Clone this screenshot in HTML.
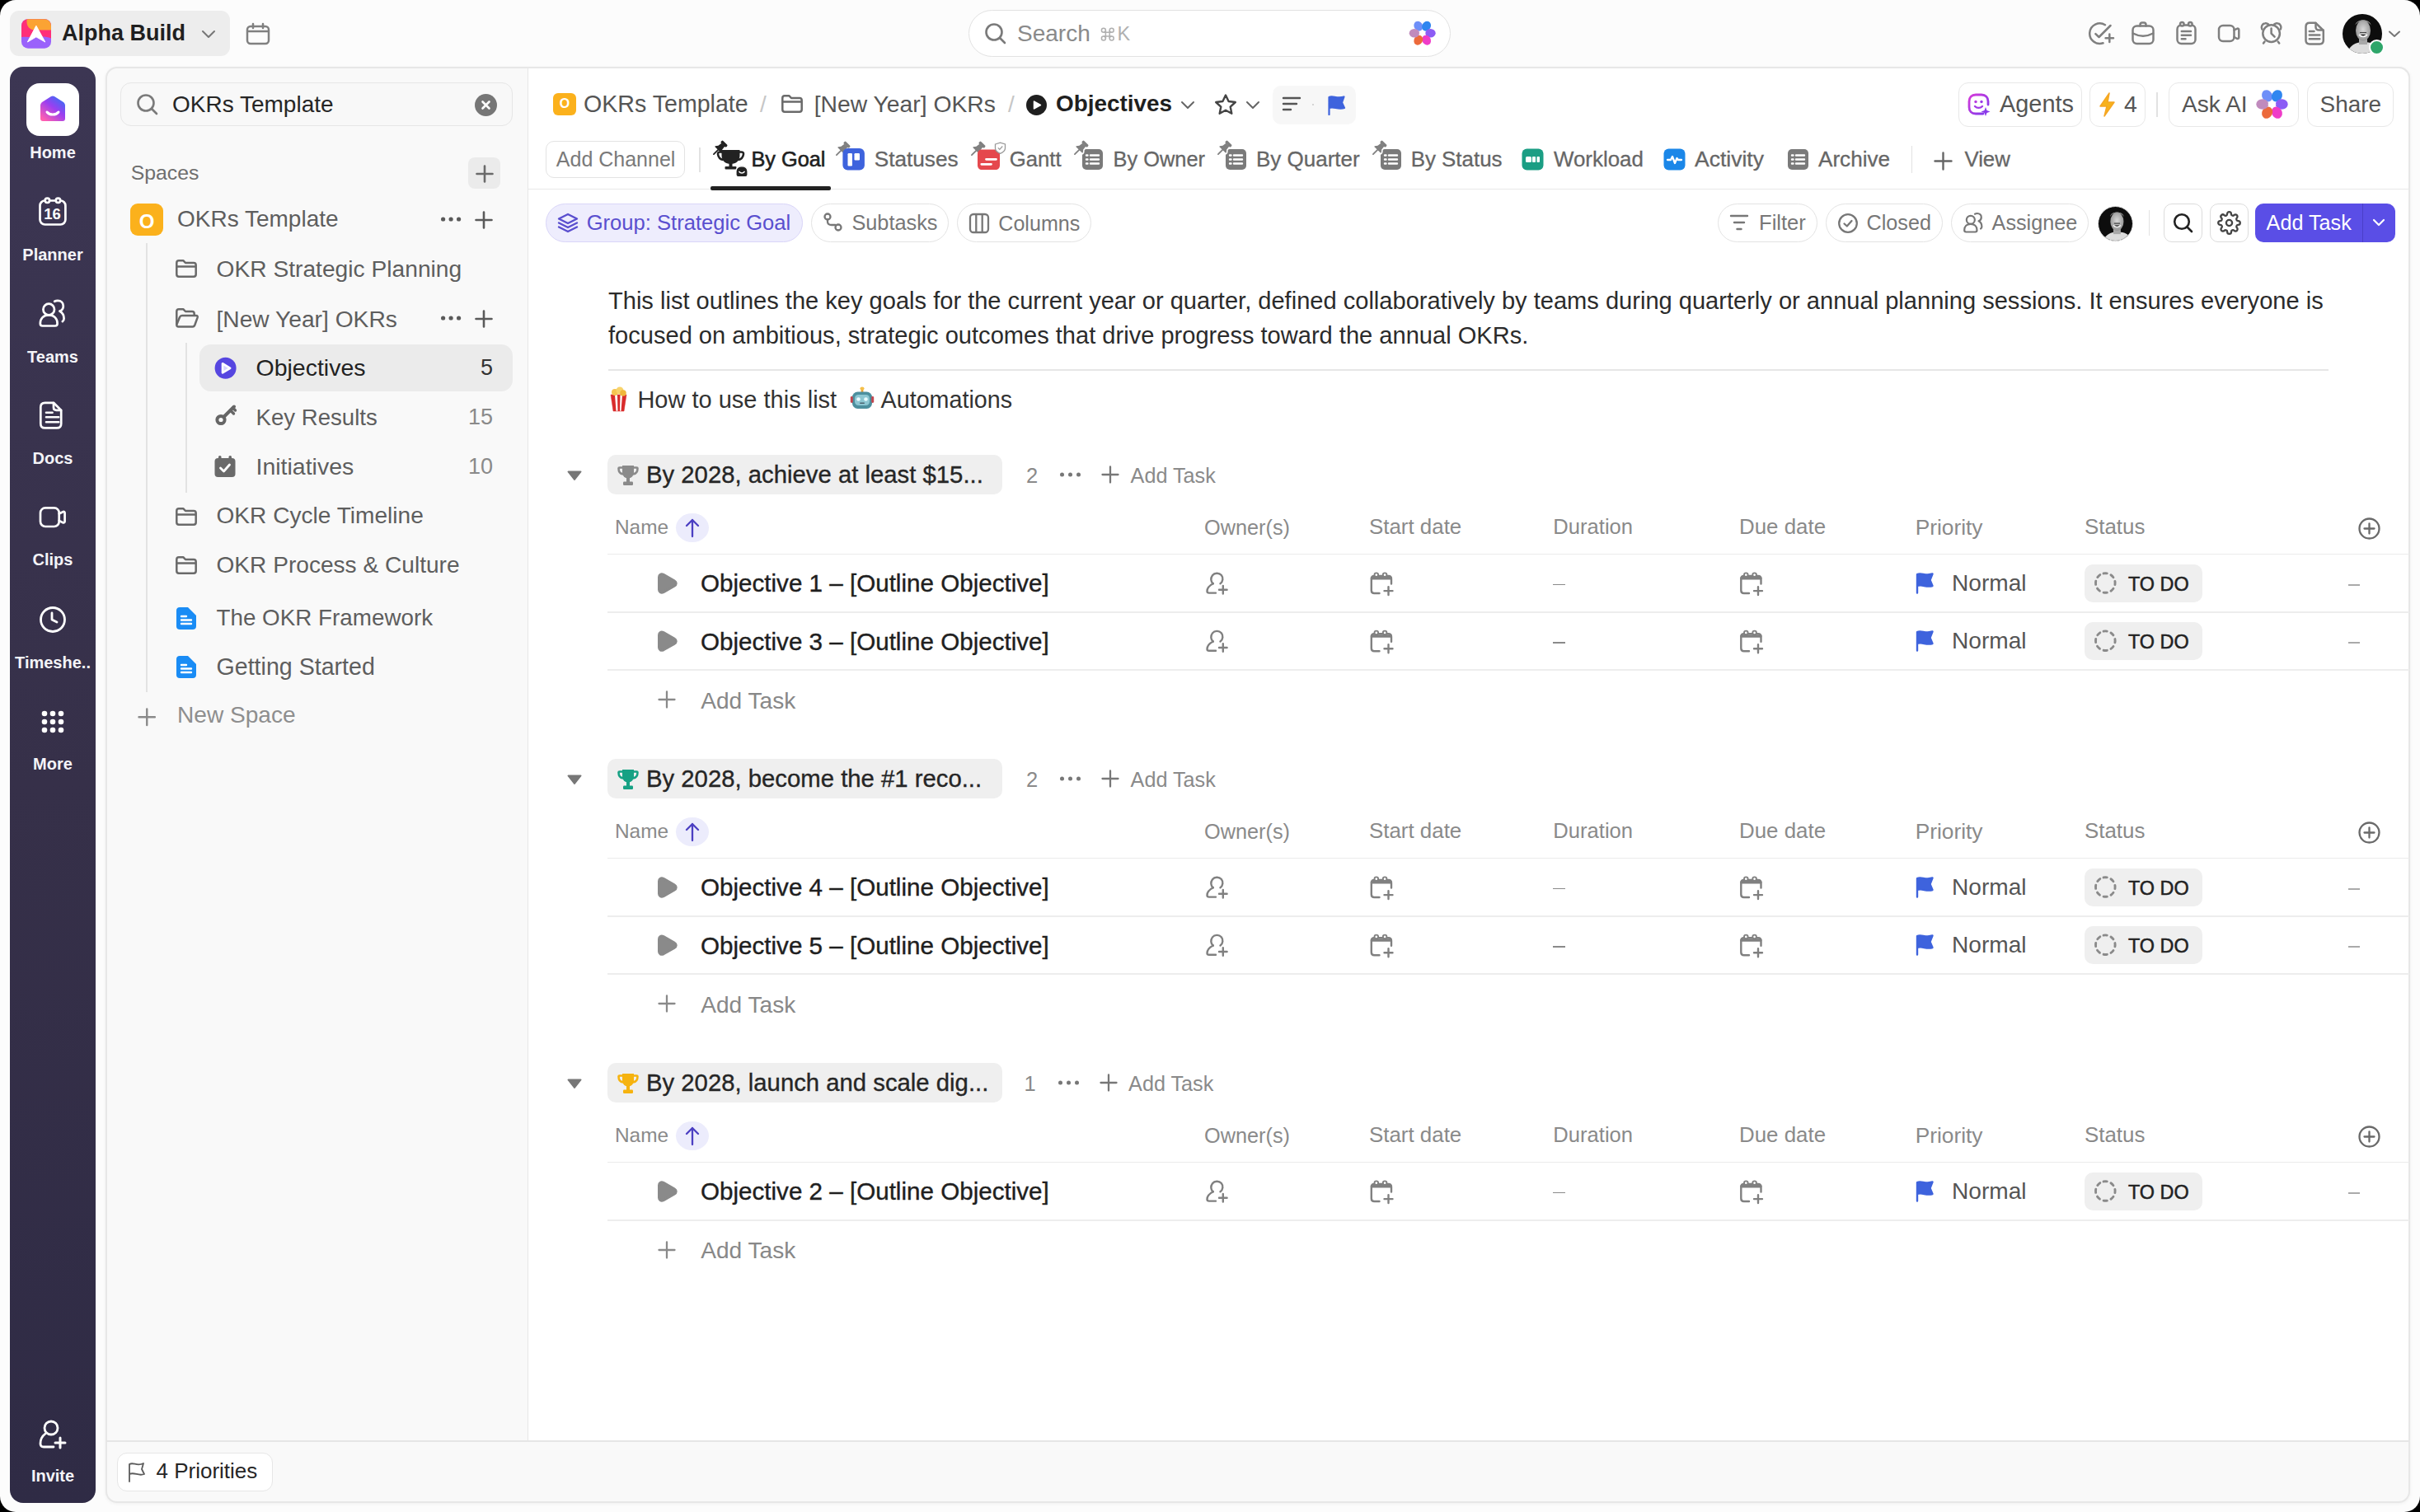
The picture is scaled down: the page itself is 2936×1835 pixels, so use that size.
<!DOCTYPE html>
<html><head><meta charset="utf-8"><title>OKRs - Objectives</title>
<style>
html,body{margin:0;padding:0;width:2936px;height:1835px;overflow:hidden;background:#000;}
.a{position:absolute;display:block;}
.t{position:absolute;line-height:1;white-space:nowrap;font-family:"Liberation Sans", sans-serif;}
</style></head><body>
<div class="a" style="left:0;top:0;width:2936px;height:1835px;background:#fcfcfc;border-radius:19px;"></div>
<div class="a" style="left:12.0px;top:13.0px;width:267.0px;height:55.0px;background:#ededed;border-radius:11px;"></div>
<div class="t" style="left:75.0px;top:27.4px;font-size:27px;color:#1f1f1f;font-weight:700;">Alpha Build</div>
<svg class="a" style="left:244.0px;top:35.0px;" width="18" height="12" viewBox="0 0 18 12" fill="none"><path d="M2 3 L9 10 L16 3" stroke="#777" stroke-width="2" stroke-linecap="round" stroke-linejoin="round"/></svg>
<svg class="a" style="left:298.0px;top:27.0px;" width="30" height="28" viewBox="0 0 30 28" fill="none"><rect x="2" y="5" width="26" height="21" rx="4" stroke="#808080" stroke-width="2.5"/><path d="M2 11H28" stroke="#808080" stroke-width="2.5"/><path d="M9 2V7M21 2V7" stroke="#808080" stroke-width="2.5" stroke-linecap="round"/></svg>
<div class="a" style="left:1175.0px;top:12.0px;width:585.0px;height:57.0px;background:#fff;border:1.5px solid #e2e2e2;border-radius:29px;box-sizing:border-box;"></div>
<svg class="a" style="left:1194.0px;top:27.0px;" width="28" height="27" viewBox="0 0 28 27" fill="none"><circle cx="12" cy="12" r="9.5" stroke="#7a7a7a" stroke-width="2.6"/><path d="M19 19L25 25" stroke="#7a7a7a" stroke-width="2.6" stroke-linecap="round"/></svg>
<div class="t" style="left:1234.0px;top:26.7px;font-size:28px;color:#8a8a8a;font-weight:400;">Search</div>
<div class="t" style="left:1355.5px;top:30.3px;font-size:23.5px;color:#b0b0b0;font-weight:400;">K</div>
<div class="a" style="left:2842.0px;top:16.5px;width:48px;height:48px;border-radius:50%;overflow:hidden;background:#0d0d0d;"><svg width="48" height="48" viewBox="0 0 48 48" style="position:absolute;left:0;top:0"><defs><radialGradient id="fc" cx="0.5" cy="0.45" r="0.6"><stop offset="0" stop-color="#d8d8d8"/><stop offset="1" stop-color="#8f8f8f"/></radialGradient></defs><path d="M6 48C8 38 16 34 26 34C36 34 44 38 46 48Z" fill="#dcdcdc"/><rect x="20" y="28" width="10" height="9" fill="#a9a9a9"/><ellipse cx="25" cy="20" rx="9" ry="12.5" fill="url(#fc)"/><path d="M15.5 14C16 5 34 5 34.5 14C33 10 28 8.5 25 8.5C21 8.5 17 10 15.5 14Z" fill="#9a9a9a"/><path d="M20 25C23 28 27 28 30 25" stroke="#f2f2f2" stroke-width="2"/><path d="M21 22.5H29" stroke="#444" stroke-width="1.2"/></svg></div>
<div class="a" style="left:2873.5px;top:48.0px;width:19.0px;height:19.0px;background:#2ea66a;border:2.5px solid #fff;border-radius:50%;box-sizing:border-box;"></div>
<svg class="a" style="left:2896.5px;top:35.0px;" width="16" height="12" viewBox="0 0 16 12" fill="none"><path d="M2 3.5L8 9L14 3.5" stroke="#777" stroke-width="2" stroke-linecap="round" stroke-linejoin="round"/></svg>
<div class="a" style="left:12.0px;top:81.0px;width:104.0px;height:1743.0px;background:linear-gradient(180deg,#3c3653 0%,#363049 50%,#2f2b45 100%);border-radius:16px;"></div>
<div class="a" style="left:32.0px;top:100.5px;width:64.0px;height:64.0px;background:#fff;border-radius:16px;"></div>
<svg class="a" style="left:46.0px;top:114.0px;" width="36" height="36" viewBox="0 0 36 36" fill="none"><defs><linearGradient id="hg" x1="0.2" y1="1" x2="0.9" y2="0.1"><stop offset="0" stop-color="#ff5fb0"/><stop offset="0.55" stop-color="#9b3ff0"/><stop offset="1" stop-color="#3a6df5"/></linearGradient></defs>
<path d="M3 14C3 12 4 11 5 10L16 3C17 2.3 19 2.3 20 3L31 10C32 11 33 12 33 14V30C33 32 32 33 30 33H6C4 33 3 32 3 30Z" fill="url(#hg)"/><path d="M11 22C14 26 22 26 25 22" stroke="#fff" stroke-width="3" stroke-linecap="round"/></svg>
<div class="t" style="left:-136.0px;width:400px;text-align:center;top:174.7px;font-size:20px;color:#f4f4f8;font-weight:700;">Home</div>
<div class="t" style="left:-136.0px;width:400px;text-align:center;top:298.6px;font-size:20px;color:#f4f4f8;font-weight:700;">Planner</div>
<div class="t" style="left:-136.0px;width:400px;text-align:center;top:422.7px;font-size:20px;color:#f4f4f8;font-weight:700;">Teams</div>
<div class="t" style="left:-136.0px;width:400px;text-align:center;top:546.0px;font-size:20px;color:#f4f4f8;font-weight:700;">Docs</div>
<div class="t" style="left:-136.0px;width:400px;text-align:center;top:669.0px;font-size:20px;color:#f4f4f8;font-weight:700;">Clips</div>
<div class="t" style="left:-136.0px;width:400px;text-align:center;top:794.0px;font-size:20px;color:#f4f4f8;font-weight:700;">Timeshe..</div>
<div class="t" style="left:-136.0px;width:400px;text-align:center;top:917.4px;font-size:20px;color:#f4f4f8;font-weight:700;">More</div>
<div class="t" style="left:-136.0px;width:400px;text-align:center;top:1780.5px;font-size:20px;color:#f4f4f8;font-weight:700;">Invite</div>
<svg class="a" style="left:46.0px;top:734.0px;" width="36" height="36" viewBox="0 0 36 36" fill="none"><circle cx="18" cy="18" r="14.5" stroke="#ffffff" stroke-width="2.8"/><path d="M17 10V18L23 21" stroke="#ffffff" stroke-width="2.8" stroke-linecap="round" stroke-linejoin="round"/></svg>
<svg class="a" style="left:50.0px;top:862.0px;" width="28" height="28" viewBox="0 0 28 28" fill="none"><circle cx="4" cy="4" r="3.3" fill="#fff"/><circle cx="4" cy="14" r="3.3" fill="#fff"/><circle cx="4" cy="24" r="3.3" fill="#fff"/><circle cx="14" cy="4" r="3.3" fill="#fff"/><circle cx="14" cy="14" r="3.3" fill="#fff"/><circle cx="14" cy="24" r="3.3" fill="#fff"/><circle cx="24" cy="4" r="3.3" fill="#fff"/><circle cx="24" cy="14" r="3.3" fill="#fff"/><circle cx="24" cy="24" r="3.3" fill="#fff"/></svg>
<svg class="a" style="left:46.0px;top:1722.0px;" width="36" height="38" viewBox="0 0 36 38" fill="none"><circle cx="16" cy="11" r="8" stroke="#ffffff" stroke-width="2.8"/><path d="M9 18C5 21 3 25 3 30C3 33 5 34 7 34H19" stroke="#ffffff" stroke-width="2.8" stroke-linecap="round"/><path d="M27 23V35M21 29H33" stroke="#ffffff" stroke-width="3" stroke-linecap="round"/></svg>
<div class="a" style="left:128.0px;top:81.0px;width:2796.0px;height:1742.5px;background:#f9f9f9;border:2px solid #e7e7e7;border-radius:14px;box-sizing:border-box;box-shadow:0 1px 4px rgba(0,0,0,0.05);"></div>
<div class="a" style="left:640.0px;top:81.0px;width:2284.0px;height:1669.0px;background:#ffffff;border-top:2px solid #e7e7e7;border-left:1.5px solid #e6e6e6;border-right:2px solid #e7e7e7;border-top-right-radius:14px;box-sizing:border-box;"></div>
<div class="a" style="left:129.0px;top:1748.3px;width:2794.0px;height:2.0px;background:#e6e6e6;"></div>
<div class="a" style="left:146.0px;top:100.0px;width:476.0px;height:53.0px;background:#f8f8f8;border:1.5px solid #e6e6e6;border-radius:13px;box-sizing:border-box;"></div>
<svg class="a" style="left:165.0px;top:113.0px;" width="28" height="27" viewBox="0 0 28 27" fill="none"><circle cx="12" cy="12" r="9.5" stroke="#7a7a7a" stroke-width="2.6"/><path d="M19 19L25 25" stroke="#7a7a7a" stroke-width="2.6" stroke-linecap="round"/></svg>
<div class="t" style="left:209.0px;top:112.6px;font-size:28px;color:#262626;font-weight:400;">OKRs Template</div>
<svg class="a" style="left:576.0px;top:114.0px;" width="27" height="27" viewBox="0 0 27 27" fill="none"><circle cx="13.5" cy="13.5" r="13.5" fill="#767676"/><path d="M9.5 9.5L17.5 17.5M17.5 9.5L9.5 17.5" stroke="#fff" stroke-width="2.6" stroke-linecap="round"/></svg>
<div class="t" style="left:158.7px;top:197.9px;font-size:24.8px;color:#6e6e6e;font-weight:400;">Spaces</div>
<div class="a" style="left:568.0px;top:191.4px;width:38.5px;height:37.6px;background:#ebebeb;border-radius:8px;"></div>
<svg class="a" style="left:576.5px;top:199.5px;" width="22" height="22" viewBox="0 0 22 22" fill="none"><path d="M11.0 1.5V20.5M1.5 11.0H20.5" stroke="#6a6a6a" stroke-width="2.6" stroke-linecap="round"/></svg>
<div class="a" style="left:158.0px;top:246.7px;width:40.0px;height:39.8px;background:#fbb11c;border-radius:9px;"></div>
<div class="t" style="left:-22.0px;width:400px;text-align:center;top:256.6px;font-size:24px;color:#fff;font-weight:700;">O</div>
<div class="t" style="left:215.0px;top:252.2px;font-size:28px;color:#5e5e5e;font-weight:400;">OKRs Template</div>
<svg class="a" style="left:535.0px;top:261.0px;" width="33.7" height="10" viewBox="0 0 33.7 10" fill="none"><circle cx="2.6" cy="5" r="2.6" fill="#5a5a5a"/><circle cx="12.1" cy="5" r="2.6" fill="#5a5a5a"/><circle cx="21.6" cy="5" r="2.6" fill="#5a5a5a"/></svg>
<svg class="a" style="left:575.5px;top:255.5px;" width="22" height="22" viewBox="0 0 22 22" fill="none"><path d="M11.0 1.5V20.5M1.5 11.0H20.5" stroke="#5a5a5a" stroke-width="2.6" stroke-linecap="round"/></svg>
<div class="a" style="left:177.2px;top:295.0px;width:1.5px;height:545.0px;background:#e3e3e3;"></div>
<svg class="a" style="left:211.5px;top:314.0px;" width="28" height="24" viewBox="0 0 28 24" fill="none"><path d="M2.3 5C2.3 3.3 3.3 2.3 5 2.3H10.5L13 5H23C24.7 5 25.7 6 25.7 7.7V19C25.7 20.7 24.7 21.7 23 21.7H5C3.3 21.7 2.3 20.7 2.3 19Z" stroke="#6a6a6a" stroke-width="2.5" stroke-linejoin="round"/><path d="M2.3 9.5H25.7" stroke="#6a6a6a" stroke-width="2.5"/></svg>
<div class="t" style="left:262.5px;top:312.0px;font-size:28.2px;color:#5e5e5e;font-weight:400;">OKR Strategic Planning</div>
<svg class="a" style="left:211.5px;top:372.5px;" width="30" height="26" viewBox="0 0 30 26" fill="none"><path d="M2.3 21V5C2.3 3.3 3.3 2.3 5 2.3H10.5L13 5H21C22.7 5 23.7 6 23.7 7.7V10" stroke="#6a6a6a" stroke-width="2.5" stroke-linejoin="round"/><path d="M2.3 21L6 12C6.5 10.8 7.3 10 8.8 10H26C27.5 10 28 11 27.6 12.3L24.5 21C24 22.3 23.3 23.5 21.8 23.5H4.5C3 23.5 2.3 22.5 2.3 21Z" stroke="#6a6a6a" stroke-width="2.5" stroke-linejoin="round"/></svg>
<div class="t" style="left:262.5px;top:372.7px;font-size:28.2px;color:#5e5e5e;font-weight:400;">[New Year] OKRs</div>
<svg class="a" style="left:535.0px;top:381.0px;" width="33.7" height="10" viewBox="0 0 33.7 10" fill="none"><circle cx="2.6" cy="5" r="2.6" fill="#5a5a5a"/><circle cx="12.1" cy="5" r="2.6" fill="#5a5a5a"/><circle cx="21.6" cy="5" r="2.6" fill="#5a5a5a"/></svg>
<svg class="a" style="left:575.5px;top:375.5px;" width="22" height="22" viewBox="0 0 22 22" fill="none"><path d="M11.0 1.5V20.5M1.5 11.0H20.5" stroke="#5a5a5a" stroke-width="2.6" stroke-linecap="round"/></svg>
<div class="a" style="left:225.2px;top:416.0px;width:1.5px;height:182.0px;background:#e3e3e3;"></div>
<div class="a" style="left:241.7px;top:417.5px;width:380.3px;height:57.0px;background:#ebebeb;border-radius:14px;"></div>
<div class="t" style="left:310.5px;top:431.8px;font-size:28.5px;color:#222222;font-weight:400;">Objectives</div>
<div class="t" style="right:2338.0px;top:433.1px;font-size:27px;color:#333;font-weight:400;">5</div>
<div class="t" style="left:310.5px;top:492.5px;font-size:27.6px;color:#5e5e5e;font-weight:400;">Key Results</div>
<div class="t" style="right:2338.0px;top:493.1px;font-size:27px;color:#8a8a8a;font-weight:400;">15</div>
<svg class="a" style="left:259.0px;top:552.0px;" width="28" height="28" viewBox="0 0 28 28" fill="none"><rect x="1.5" y="4" width="25" height="23" rx="4" fill="#6a6a6a"/><rect x="6" y="1" width="3.5" height="6" rx="1.5" fill="#6a6a6a"/><rect x="18.5" y="1" width="3.5" height="6" rx="1.5" fill="#6a6a6a"/><path d="M8.5 16L12.5 20L19.5 12" stroke="#fff" stroke-width="2.8" stroke-linecap="round" stroke-linejoin="round"/></svg>
<div class="t" style="left:310.5px;top:551.8px;font-size:28.5px;color:#5e5e5e;font-weight:400;">Initiatives</div>
<div class="t" style="right:2338.0px;top:553.0px;font-size:27px;color:#8a8a8a;font-weight:400;">10</div>
<svg class="a" style="left:211.5px;top:615.0px;" width="28" height="24" viewBox="0 0 28 24" fill="none"><path d="M2.3 5C2.3 3.3 3.3 2.3 5 2.3H10.5L13 5H23C24.7 5 25.7 6 25.7 7.7V19C25.7 20.7 24.7 21.7 23 21.7H5C3.3 21.7 2.3 20.7 2.3 19Z" stroke="#6a6a6a" stroke-width="2.5" stroke-linejoin="round"/><path d="M2.3 9.5H25.7" stroke="#6a6a6a" stroke-width="2.5"/></svg>
<div class="t" style="left:262.5px;top:612.1px;font-size:28.1px;color:#5e5e5e;font-weight:400;">OKR Cycle Timeline</div>
<svg class="a" style="left:211.5px;top:673.5px;" width="28" height="24" viewBox="0 0 28 24" fill="none"><path d="M2.3 5C2.3 3.3 3.3 2.3 5 2.3H10.5L13 5H23C24.7 5 25.7 6 25.7 7.7V19C25.7 20.7 24.7 21.7 23 21.7H5C3.3 21.7 2.3 20.7 2.3 19Z" stroke="#6a6a6a" stroke-width="2.5" stroke-linejoin="round"/><path d="M2.3 9.5H25.7" stroke="#6a6a6a" stroke-width="2.5"/></svg>
<div class="t" style="left:262.5px;top:671.5px;font-size:28.1px;color:#5e5e5e;font-weight:400;">OKR Process &amp; Culture</div>
<svg class="a" style="left:213.5px;top:736.5px;" width="25" height="27" viewBox="0 0 25 27" fill="none"><path d="M0 4C0 1.5 1.5 0 4 0H14L24 10V23C24 25.5 22.5 27 20 27H4C1.5 27 0 25.5 0 23Z" fill="#1a8cf5"/><path d="M6 11H12M6 15.5H18M6 20H18" stroke="#fff" stroke-width="2.4" stroke-linecap="round"/></svg>
<div class="t" style="left:262.5px;top:736.4px;font-size:27.8px;color:#5e5e5e;font-weight:400;">The OKR Framework</div>
<svg class="a" style="left:213.5px;top:796.0px;" width="25" height="27" viewBox="0 0 25 27" fill="none"><path d="M0 4C0 1.5 1.5 0 4 0H14L24 10V23C24 25.5 22.5 27 20 27H4C1.5 27 0 25.5 0 23Z" fill="#1a8cf5"/><path d="M6 11H12M6 15.5H18M6 20H18" stroke="#fff" stroke-width="2.4" stroke-linecap="round"/></svg>
<div class="t" style="left:262.5px;top:794.7px;font-size:28.6px;color:#5e5e5e;font-weight:400;">Getting Started</div>
<svg class="a" style="left:166.5px;top:859.0px;" width="22.5" height="22.5" viewBox="0 0 22.5 22.5" fill="none"><path d="M11.25 1.5V21.0M1.5 11.25H21.0" stroke="#8a8a8a" stroke-width="2.4" stroke-linecap="round"/></svg>
<div class="t" style="left:215.0px;top:854.1px;font-size:28.1px;color:#8e8e8e;font-weight:400;">New Space</div>
<div class="a" style="left:141.7px;top:1762.8px;width:189.3px;height:47.2px;background:#fff;border:1.5px solid #e6e6e6;border-radius:12px;box-sizing:border-box;"></div>
<svg class="a" style="left:154.0px;top:1773.0px;" width="24" height="27" viewBox="0 0 24 27" fill="none"><path d="M3 25V4C8 1 12 7 20 3L18 10L21 16C14 19 9 13 3 16" stroke="#5c5c5c" stroke-width="1.8" stroke-linecap="round" stroke-linejoin="round"/></svg>
<div class="t" style="left:189.5px;top:1771.7px;font-size:26px;color:#262626;font-weight:400;">4 Priorities</div>
<div class="a" style="left:671.0px;top:112.8px;width:27.7px;height:27.2px;background:#fbb11c;border-radius:6px;"></div>
<div class="t" style="left:484.9px;width:400px;text-align:center;top:118.4px;font-size:16px;color:#fff;font-weight:700;">O</div>
<div class="t" style="left:708.0px;top:112.1px;font-size:28.6px;color:#555555;font-weight:400;">OKRs Template</div>
<div class="t" style="left:922.0px;top:112.6px;font-size:28px;color:#c6c6c6;font-weight:400;">/</div>
<svg class="a" style="left:946.5px;top:113.5px;" width="28" height="24" viewBox="0 0 28 24" fill="none"><path d="M2.3 5C2.3 3.3 3.3 2.3 5 2.3H10.5L13 5H23C24.7 5 25.7 6 25.7 7.7V19C25.7 20.7 24.7 21.7 23 21.7H5C3.3 21.7 2.3 20.7 2.3 19Z" stroke="#6a6a6a" stroke-width="2.5" stroke-linejoin="round"/><path d="M2.3 9.5H25.7" stroke="#6a6a6a" stroke-width="2.5"/></svg>
<div class="t" style="left:987.7px;top:112.3px;font-size:28.3px;color:#555555;font-weight:400;">[New Year] OKRs</div>
<div class="t" style="left:1223.0px;top:112.6px;font-size:28px;color:#c6c6c6;font-weight:400;">/</div>
<svg class="a" style="left:1245.4px;top:114.6px;" width="25" height="25" viewBox="0 0 26 26" fill="none"><circle cx="13" cy="13" r="13" fill="#1f1f1f"/><path d="M10 8.5L18 13L10 17.5Z" fill="#fff" stroke="#fff" stroke-width="1.8" stroke-linejoin="round"/></svg>
<div class="t" style="left:1281.0px;top:112.3px;font-size:27.9px;color:#1f1f1f;font-weight:700;">Objectives</div>
<svg class="a" style="left:1432.0px;top:121.0px;" width="18" height="13" viewBox="0 0 18 13" fill="none"><path d="M2 3L9 10L16 3" stroke="#666" stroke-width="2" stroke-linecap="round" stroke-linejoin="round"/></svg>
<svg class="a" style="left:1472.0px;top:113.0px;" width="30" height="29" viewBox="0 0 30 29" fill="none"><path d="M15 2.5L18.6 10L26.8 11L20.7 16.6L22.3 24.8L15 20.8L7.7 24.8L9.3 16.6L3.2 11L11.4 10Z" stroke="#444" stroke-width="2.4" stroke-linejoin="round"/></svg>
<svg class="a" style="left:1511.0px;top:121.0px;" width="18" height="13" viewBox="0 0 18 13" fill="none"><path d="M2 3L9 10L16 3" stroke="#666" stroke-width="2" stroke-linecap="round" stroke-linejoin="round"/></svg>
<div class="a" style="left:1544.0px;top:104.0px;width:101.0px;height:46.5px;background:#f7f7f7;border-radius:10px;"></div>
<svg class="a" style="left:1554.0px;top:116.0px;" width="26" height="20" viewBox="0 0 26 20" fill="none"><path d="M3 3H23M3 10H19M3 17H12" stroke="#555" stroke-width="2.4" stroke-linecap="round"/></svg>
<div class="a" style="left:1591.5px;top:125.5px;width:2.5px;height:2.5px;background:#c8c8c8;border-radius:50%;"></div>
<svg class="a" style="left:1609.0px;top:115.0px;" width="24" height="25" viewBox="0 0 24 25" fill="none"><path d="M3.5 24V3C8 0.5 13 5.5 21.5 2.5L19 9.5L22 16C14 18.5 9 13.5 3.5 16" fill="#3e63dd" stroke="#3e63dd" stroke-width="2.2" stroke-linejoin="round" stroke-linecap="round"/></svg>
<div class="a" style="left:2375.5px;top:99.5px;width:150.5px;height:54.5px;background:#fff;border:1.5px solid #e8e8e8;border-radius:12px;box-sizing:border-box;"></div>
<svg class="a" style="left:2386.0px;top:112.0px;" width="30" height="30" viewBox="0 0 30 30" fill="none"><defs><linearGradient id="ag" x1="0" y1="0" x2="1" y2="1"><stop offset="0" stop-color="#d63bd9"/><stop offset="1" stop-color="#7c3aed"/></linearGradient></defs><path d="M20 26H11C6 26 3 23 3 18V11C3 6 6 3 11 3H18C23 3 26 6 26 11V15" stroke="url(#ag)" stroke-width="2.8" stroke-linecap="round"/><circle cx="11" cy="11.5" r="1.7" fill="#b83ae0"/><circle cx="18" cy="11.5" r="1.7" fill="#9b3ae8"/><path d="M10 17C12.5 19.5 16.5 19.5 19 17" stroke="#a33ae6" stroke-width="2.4" stroke-linecap="round"/><path d="M23 18L24.5 22L28.5 23.5L24.5 25L23 29L21.5 25L17.5 23.5L21.5 22Z" fill="#8b3aea"/></svg>
<div class="t" style="left:2426.0px;top:112.0px;font-size:28.9px;color:#555555;font-weight:400;">Agents</div>
<div class="a" style="left:2535.0px;top:99.5px;width:68.0px;height:54.5px;background:#fff;border:1.5px solid #e8e8e8;border-radius:12px;box-sizing:border-box;"></div>
<svg class="a" style="left:2544.0px;top:111.0px;" width="25" height="32" viewBox="0 0 25 32" fill="none"><path d="M15 2L4 18H12L9 30L21 13H13Z" fill="#f7b21a" stroke="#f5a623" stroke-width="1.5" stroke-linejoin="round"/></svg>
<div class="t" style="left:2577.0px;top:112.4px;font-size:28.5px;color:#555555;font-weight:400;">4</div>
<div class="a" style="left:2616.2px;top:112.0px;width:1.5px;height:30.4px;background:#e2e2e2;"></div>
<div class="a" style="left:2631.0px;top:99.5px;width:158.0px;height:54.5px;background:#fff;border:1.5px solid #e8e8e8;border-radius:12px;box-sizing:border-box;"></div>
<div class="t" style="left:2647.0px;top:112.7px;font-size:28.1px;color:#555555;font-weight:400;">Ask AI</div>
<div class="a" style="left:2799.0px;top:99.5px;width:105.0px;height:54.5px;background:#fff;border:1.5px solid #e8e8e8;border-radius:12px;box-sizing:border-box;"></div>
<div class="t" style="left:2814.6px;top:112.9px;font-size:27.9px;color:#555555;font-weight:400;">Share</div>
<div class="a" style="left:662.0px;top:171.0px;width:169.0px;height:45.0px;background:#fff;border:1.5px solid #e3e3e3;border-radius:10px;box-sizing:border-box;"></div>
<div class="t" style="left:674.8px;top:181.2px;font-size:25px;color:#7a7a7a;font-weight:400;">Add Channel</div>
<div class="a" style="left:848.2px;top:178.7px;width:1.5px;height:30.8px;background:#e2e2e2;"></div>
<div class="a" style="left:640.0px;top:228.5px;width:2283.0px;height:1.5px;background:#e8e8e8;"></div>
<div class="t" style="left:911.5px;top:181.0px;font-size:25.3px;color:#1f1f1f;font-weight:400;-webkit-text-stroke:0.6px #1f1f1f;">By Goal</div>
<div class="a" style="left:862.0px;top:226.0px;width:146.0px;height:4.7px;background:#222;border-radius:2px;"></div>
<div class="t" style="left:1060.7px;top:180.2px;font-size:26.2px;color:#666666;font-weight:400;-webkit-text-stroke:0.3px #666;">Statuses</div>
<div class="t" style="left:1224.8px;top:180.7px;font-size:25.7px;color:#666666;font-weight:400;-webkit-text-stroke:0.3px #666;">Gantt</div>
<svg class="a" style="left:1311.5px;top:180.0px;" width="27" height="27" viewBox="0 0 27 27" fill="none"><rect x="1" y="1" width="25" height="25" rx="5" fill="#7a7a7a"/><path d="M6 8.5H7.5M11 8.5H21M6 13.5H7.5M11 13.5H21M6 18.5H7.5M11 18.5H21" stroke="#fff" stroke-width="2.4" stroke-linecap="round"/></svg>
<div class="t" style="left:1350.5px;top:180.9px;font-size:25.4px;color:#666666;font-weight:400;-webkit-text-stroke:0.3px #666;">By Owner</div>
<svg class="a" style="left:1485.5px;top:180.0px;" width="27" height="27" viewBox="0 0 27 27" fill="none"><rect x="1" y="1" width="25" height="25" rx="5" fill="#7a7a7a"/><path d="M6 8.5H7.5M11 8.5H21M6 13.5H7.5M11 13.5H21M6 18.5H7.5M11 18.5H21" stroke="#fff" stroke-width="2.4" stroke-linecap="round"/></svg>
<div class="t" style="left:1524.0px;top:180.4px;font-size:26px;color:#666666;font-weight:400;-webkit-text-stroke:0.3px #666;">By Quarter</div>
<svg class="a" style="left:1673.5px;top:180.0px;" width="27" height="27" viewBox="0 0 27 27" fill="none"><rect x="1" y="1" width="25" height="25" rx="5" fill="#7a7a7a"/><path d="M6 8.5H7.5M11 8.5H21M6 13.5H7.5M11 13.5H21M6 18.5H7.5M11 18.5H21" stroke="#fff" stroke-width="2.4" stroke-linecap="round"/></svg>
<div class="t" style="left:1711.7px;top:180.5px;font-size:25.9px;color:#666666;font-weight:400;-webkit-text-stroke:0.3px #666;">By Status</div>
<svg class="a" style="left:1845.5px;top:180.0px;" width="27" height="27" viewBox="0 0 27 27" fill="none"><rect x="0.5" y="0.5" width="26" height="26" rx="6" fill="#1b9e84"/><rect x="5" y="10" width="7" height="7" rx="1.5" fill="#fff"/><rect x="13" y="10" width="4" height="7" rx="1" fill="#fff"/><rect x="18.5" y="10" width="3.5" height="7" rx="1" fill="#fff"/></svg>
<div class="t" style="left:1885.0px;top:180.5px;font-size:25.9px;color:#666666;font-weight:400;-webkit-text-stroke:0.3px #666;">Workload</div>
<svg class="a" style="left:2017.5px;top:180.0px;" width="27" height="27" viewBox="0 0 27 27" fill="none"><rect x="0.5" y="0.5" width="26" height="26" rx="6" fill="#1b87e8"/><path d="M5 14H9L11 10L14 18L16.5 12L18 14H22" stroke="#fff" stroke-width="2.3" stroke-linecap="round" stroke-linejoin="round"/></svg>
<div class="t" style="left:2056.0px;top:180.0px;font-size:26.5px;color:#666666;font-weight:400;-webkit-text-stroke:0.3px #666;">Activity</div>
<svg class="a" style="left:2167.5px;top:180.0px;" width="27" height="27" viewBox="0 0 27 27" fill="none"><rect x="1" y="1" width="25" height="25" rx="5" fill="#7a7a7a"/><path d="M6 8.5H7.5M11 8.5H21M6 13.5H7.5M11 13.5H21M6 18.5H7.5M11 18.5H21" stroke="#fff" stroke-width="2.4" stroke-linecap="round"/></svg>
<div class="t" style="left:2206.0px;top:180.3px;font-size:26.1px;color:#666666;font-weight:400;-webkit-text-stroke:0.3px #666;">Archive</div>
<div class="a" style="left:2318.7px;top:177.0px;width:1.5px;height:32.5px;background:#e2e2e2;"></div>
<svg class="a" style="left:2346.0px;top:183.5px;" width="23" height="23" viewBox="0 0 23 23" fill="none"><path d="M11.5 1.5V21.5M1.5 11.5H21.5" stroke="#666" stroke-width="2.4" stroke-linecap="round"/></svg>
<div class="t" style="left:2383.4px;top:180.6px;font-size:25.8px;color:#666666;font-weight:400;-webkit-text-stroke:0.3px #666;">View</div>
<div class="a" style="left:661.7px;top:246.8px;width:312.3px;height:47.0px;background:#eeedfd;border:1.5px solid #d9d5f8;border-radius:24px;box-sizing:border-box;"></div>
<svg class="a" style="left:675.0px;top:257.0px;" width="28" height="27" viewBox="0 0 28 27" fill="none"><path d="M14 3L25 8.5L14 14L3 8.5Z" stroke="#5a4fcf" stroke-width="2.4" stroke-linejoin="round"/><path d="M3 13.5L14 19L25 13.5M3 18.5L14 24L25 18.5" stroke="#5a4fcf" stroke-width="2.4" stroke-linecap="round" stroke-linejoin="round"/></svg>
<div class="t" style="left:711.7px;top:258.0px;font-size:25.6px;color:#5a4fcf;font-weight:400;">Group: Strategic Goal</div>
<div class="a" style="left:983.6px;top:246.8px;width:167.0px;height:47.0px;background:#fff;border:1.5px solid #e3e3e3;border-radius:24px;box-sizing:border-box;"></div>
<svg class="a" style="left:998.0px;top:257.0px;" width="26" height="26" viewBox="0 0 26 26" fill="none"><circle cx="6" cy="6" r="3.5" stroke="#777777" stroke-width="2.3"/><circle cx="19" cy="19" r="3.5" stroke="#777777" stroke-width="2.3"/><path d="M6 9.5V12C6 15 8 16 11 16H15.5" stroke="#777777" stroke-width="2.3" stroke-linecap="round"/></svg>
<div class="t" style="left:1033.4px;top:258.3px;font-size:25.3px;color:#777777;font-weight:400;">Subtasks</div>
<div class="a" style="left:1160.7px;top:246.8px;width:163.3px;height:47.0px;background:#fff;border:1.5px solid #e3e3e3;border-radius:24px;box-sizing:border-box;"></div>
<svg class="a" style="left:1175.0px;top:258.0px;" width="26" height="26" viewBox="0 0 26 26" fill="none"><rect x="2" y="2" width="22" height="22" rx="4" stroke="#777777" stroke-width="2.3"/><path d="M9.3 2V24M16.7 2V24" stroke="#777777" stroke-width="2.3"/></svg>
<div class="t" style="left:1211.3px;top:258.5px;font-size:25.1px;color:#777777;font-weight:400;">Columns</div>
<div class="a" style="left:2083.5px;top:246.8px;width:121.3px;height:47.0px;background:#fff;border:1.5px solid #e3e3e3;border-radius:24px;box-sizing:border-box;"></div>
<svg class="a" style="left:2097.0px;top:259.0px;" width="26" height="22" viewBox="0 0 26 22" fill="none"><path d="M3 3H23M7 11H19M10.5 19H15.5" stroke="#777777" stroke-width="2.4" stroke-linecap="round"/></svg>
<div class="t" style="left:2134.0px;top:258.0px;font-size:25.6px;color:#777777;font-weight:400;">Filter</div>
<div class="a" style="left:2215.0px;top:246.8px;width:142.0px;height:47.0px;background:#fff;border:1.5px solid #e3e3e3;border-radius:24px;box-sizing:border-box;"></div>
<svg class="a" style="left:2229.0px;top:258.0px;" width="26" height="26" viewBox="0 0 26 26" fill="none"><circle cx="13" cy="13" r="10.8" stroke="#777777" stroke-width="2.3"/><path d="M8.5 13.5L11.8 16.5L17.5 10" stroke="#777777" stroke-width="2.3" stroke-linecap="round" stroke-linejoin="round"/></svg>
<div class="t" style="left:2264.5px;top:258.4px;font-size:25.2px;color:#777777;font-weight:400;">Closed</div>
<div class="a" style="left:2367.0px;top:246.8px;width:166.5px;height:47.0px;background:#fff;border:1.5px solid #e3e3e3;border-radius:24px;box-sizing:border-box;"></div>
<div class="t" style="left:2416.6px;top:258.4px;font-size:25.2px;color:#777777;font-weight:400;">Assignee</div>
<div class="a" style="left:2544.9px;top:250.2px;width:43px;height:43px;border-radius:50%;overflow:hidden;background:#0d0d0d;border:1.5px solid #e3e3e3;box-sizing:border-box;"><svg width="43" height="43" viewBox="0 0 48 48" style="position:absolute;left:0;top:0"><defs><radialGradient id="fc" cx="0.5" cy="0.45" r="0.6"><stop offset="0" stop-color="#d8d8d8"/><stop offset="1" stop-color="#8f8f8f"/></radialGradient></defs><path d="M6 48C8 38 16 34 26 34C36 34 44 38 46 48Z" fill="#dcdcdc"/><rect x="20" y="28" width="10" height="9" fill="#a9a9a9"/><ellipse cx="25" cy="20" rx="9" ry="12.5" fill="url(#fc)"/><path d="M15.5 14C16 5 34 5 34.5 14C33 10 28 8.5 25 8.5C21 8.5 17 10 15.5 14Z" fill="#9a9a9a"/><path d="M20 25C23 28 27 28 30 25" stroke="#f2f2f2" stroke-width="2"/><path d="M21 22.5H29" stroke="#444" stroke-width="1.2"/></svg></div>
<div class="a" style="left:2606.5px;top:255.0px;width:1.5px;height:31.0px;background:#e2e2e2;"></div>
<div class="a" style="left:2624.7px;top:247.0px;width:47.0px;height:47.0px;background:#fff;border:1.5px solid #dcdcdc;border-radius:10px;box-sizing:border-box;"></div>
<svg class="a" style="left:2635.0px;top:257.0px;" width="28" height="28" viewBox="0 0 28 28" fill="none"><circle cx="12" cy="12" r="8.8" stroke="#222" stroke-width="2.6"/><path d="M18.5 18.5L24 24" stroke="#222" stroke-width="2.6" stroke-linecap="round"/></svg>
<div class="a" style="left:2680.8px;top:247.0px;width:47.0px;height:47.0px;background:#fff;border:1.5px solid #dcdcdc;border-radius:10px;box-sizing:border-box;"></div>
<svg class="a" style="left:2690.0px;top:256.0px;" width="29" height="29" viewBox="0 0 24 24" fill="none"><path d="M12 15a3 3 0 1 0 0-6 3 3 0 0 0 0 6Z" stroke="#444" stroke-width="1.9"/><path d="M19.4 15a1.65 1.65 0 0 0 .33 1.82l.06.06a2 2 0 1 1-2.83 2.83l-.06-.06a1.65 1.65 0 0 0-1.82-.33 1.65 1.65 0 0 0-1 1.51V21a2 2 0 1 1-4 0v-.09A1.65 1.65 0 0 0 9 19.4a1.65 1.65 0 0 0-1.82.33l-.06.06a2 2 0 1 1-2.83-2.83l.06-.06A1.65 1.65 0 0 0 4.68 15a1.65 1.65 0 0 0-1.51-1H3a2 2 0 1 1 0-4h.09A1.65 1.65 0 0 0 4.6 9a1.65 1.65 0 0 0-.33-1.82l-.06-.06a2 2 0 1 1 2.83-2.83l.06.06A1.65 1.65 0 0 0 9 4.68a1.65 1.65 0 0 0 1-1.51V3a2 2 0 1 1 4 0v.09a1.65 1.65 0 0 0 1 1.51 1.65 1.65 0 0 0 1.82-.33l.06-.06a2 2 0 1 1 2.83 2.83l-.06.06A1.65 1.65 0 0 0 19.4 9a1.65 1.65 0 0 0 1.51 1H21a2 2 0 1 1 0 4h-.09a1.65 1.65 0 0 0-1.51 1Z" stroke="#444" stroke-width="1.9"/></svg>
<div class="a" style="left:2736.0px;top:247.0px;width:170.0px;height:47.0px;background:#5a4ee6;border-radius:10px;"></div>
<div class="t" style="left:2749.6px;top:258.4px;font-size:25.2px;color:#ffffff;font-weight:400;">Add Task</div>
<div class="a" style="left:2865.8px;top:247.0px;width:1.5px;height:47.0px;background:#4a3fc8;"></div>
<svg class="a" style="left:2877.0px;top:264.0px;" width="18" height="12" viewBox="0 0 18 12" fill="none"><path d="M3 3L9 9L15 3" stroke="#fff" stroke-width="2.2" stroke-linecap="round" stroke-linejoin="round"/></svg>
<div class="t" style="left:738.0px;top:350.8px;font-size:29.07px;color:#2b2b2b;font-weight:400;">This list outlines the key goals for the current year or quarter, defined collaboratively by teams during quarterly or annual planning sessions. It ensures everyone is</div>
<div class="t" style="left:738.0px;top:393.3px;font-size:29.07px;color:#2b2b2b;font-weight:400;">focused on ambitious, strategic outcomes that drive progress toward the annual OKRs.</div>
<div class="a" style="left:738.0px;top:448.3px;width:2087.0px;height:1.5px;background:#e6e6e6;"></div>
<svg class="a" style="left:738.0px;top:469.0px;" width="25" height="31" viewBox="0 0 25 31" fill="none"><path d="M3 10L6 30H19L22 10Z" fill="#fff" stroke="#d92b2b" stroke-width="0.5"/><path d="M3 10L6 30H9.5L8 10ZM11 10L11.5 30H14L14.5 10ZM17 10L15.5 30H19L22 10Z" fill="#d92b2b"/><circle cx="8" cy="7" r="4" fill="#f5c451"/><circle cx="14" cy="5" r="4.5" fill="#f8d36b"/><circle cx="18" cy="8" r="3.8" fill="#f0b73c"/></svg>
<div class="t" style="left:773.4px;top:470.6px;font-size:29px;color:#333333;font-weight:400;">How to use this list</div>
<div class="t" style="left:1068.6px;top:470.8px;font-size:28.7px;color:#333333;font-weight:400;">Automations</div>
<svg class="a" style="left:687.0px;top:569.0px;" width="20" height="16" viewBox="0 0 20 16" fill="none"><path d="M2.5 3.5H17.5L10 13Z" fill="#777" stroke="#777" stroke-width="2" stroke-linejoin="round"/></svg>
<div class="a" style="left:737.0px;top:551.5px;width:479.0px;height:48.0px;background:#efefef;border-radius:10px;"></div>
<svg class="a" style="left:748.0px;top:562.5px;" width="28" height="27" viewBox="0 0 28 27" fill="none"><path d="M7 2H21V10C21 14.5 18 17.5 14 17.5C10 17.5 7 14.5 7 10Z" fill="#8a8a8a"/><path d="M7 4.5H3.5C3 4.5 2.5 5 2.5 5.5C2.5 9.5 4.5 12 8 12.5M21 4.5H24.5C25 4.5 25.5 5 25.5 5.5C25.5 9.5 23.5 12 20 12.5" stroke="#8a8a8a" stroke-width="2.6"/><rect x="12" y="17" width="4" height="5" fill="#8a8a8a"/><rect x="8" y="21.5" width="12" height="4.5" rx="1.2" fill="#8a8a8a"/></svg>
<div class="t" style="left:784.0px;top:561.3px;font-size:29.3px;color:#262626;font-weight:400;-webkit-text-stroke:0.35px #262626;">By 2028, achieve at least $15...</div>
<div class="t" style="left:1245.0px;top:564.8px;font-size:25.5px;color:#8a8a8a;font-weight:400;">2</div>
<svg class="a" style="left:1286.0px;top:570.8px;" width="35.0" height="10" viewBox="0 0 35.0 10" fill="none"><circle cx="2.5" cy="5" r="2.5" fill="#777"/><circle cx="12.5" cy="5" r="2.5" fill="#777"/><circle cx="22.5" cy="5" r="2.5" fill="#777"/></svg>
<svg class="a" style="left:1336.0px;top:565.0px;" width="22" height="22" viewBox="0 0 22 22" fill="none"><path d="M11.0 1.5V20.5M1.5 11.0H20.5" stroke="#777" stroke-width="2.3" stroke-linecap="round"/></svg>
<div class="t" style="left:1371.6px;top:565.1px;font-size:25.2px;color:#8a8a8a;font-weight:400;">Add Task</div>
<div class="t" style="left:746.0px;top:628.0px;font-size:24.4px;color:#8a8a8a;font-weight:400;">Name</div>
<div class="a" style="left:820.4px;top:623.0px;width:39.2px;height:35.0px;background:#ececfc;border-radius:50%;"></div>
<svg class="a" style="left:830.0px;top:628.0px;" width="20" height="26" viewBox="0 0 20 26" fill="none"><path d="M10 23V3M3 10L10 3L17 10" stroke="#4b3fc2" stroke-width="2.3" stroke-linecap="round" stroke-linejoin="round"/></svg>
<div class="t" style="left:1461.0px;top:627.5px;font-size:25.3px;color:#8a8a8a;font-weight:400;">Owner(s)</div>
<div class="t" style="left:1661.0px;top:627.0px;font-size:25.9px;color:#8a8a8a;font-weight:400;">Start date</div>
<div class="t" style="left:1884.3px;top:627.2px;font-size:25.6px;color:#8a8a8a;font-weight:400;">Duration</div>
<div class="t" style="left:2110.0px;top:627.0px;font-size:25.9px;color:#8a8a8a;font-weight:400;">Due date</div>
<div class="t" style="left:2323.7px;top:626.6px;font-size:26.3px;color:#8a8a8a;font-weight:400;">Priority</div>
<div class="t" style="left:2529.0px;top:627.0px;font-size:25.9px;color:#8a8a8a;font-weight:400;">Status</div>
<svg class="a" style="left:2860.0px;top:626.5px;" width="29" height="29" viewBox="0 0 29 29" fill="none"><circle cx="14.5" cy="14.5" r="12" stroke="#6a6a6a" stroke-width="2.3"/><path d="M14.5 8.5V20.5M8.5 14.5H20.5" stroke="#6a6a6a" stroke-width="2.3" stroke-linecap="round"/></svg>
<div class="a" style="left:737.0px;top:671.8px;width:2186.0px;height:1.5px;background:#ebebeb;"></div>
<div class="t" style="left:850.0px;top:693.3px;font-size:29.6px;color:#1f1f1f;font-weight:400;-webkit-text-stroke:0.4px #1f1f1f;">Objective 1 – [Outline Objective]</div>
<div class="a" style="left:1884.0px;top:708.7px;width:15.0px;height:1.7px;background:#8a8a8a;"></div>
<svg class="a" style="left:2322.5px;top:694.0px;" width="24" height="27" viewBox="0 0 24 27" fill="none"><path d="M3 25.5V3C8 0.5 13 5.5 21.5 2.5L18.5 10L21.5 17C14 19.5 9 14.5 3 17" fill="#3e63dd" stroke="#3e63dd" stroke-width="2.4" stroke-linejoin="round" stroke-linecap="round"/></svg>
<div class="t" style="left:2368.0px;top:694.1px;font-size:28.1px;color:#555555;font-weight:400;">Normal</div>
<div class="a" style="left:2529.0px;top:684.5px;width:143.0px;height:46.5px;background:#efefef;border-radius:10px;"></div>
<div class="t" style="left:2582.0px;top:697.6px;font-size:23.4px;color:#222222;font-weight:400;-webkit-text-stroke:0.5px #222;">TO DO</div>
<div class="a" style="left:2848.6px;top:709.2px;width:14.9px;height:1.5px;background:#aaaaaa;"></div>
<div class="a" style="left:737.0px;top:742.0px;width:2186.0px;height:1.5px;background:#ededed;"></div>
<div class="t" style="left:850.0px;top:763.5px;font-size:29.6px;color:#1f1f1f;font-weight:400;-webkit-text-stroke:0.4px #1f1f1f;">Objective 3 – [Outline Objective]</div>
<div class="a" style="left:1884.0px;top:778.9px;width:15.0px;height:1.7px;background:#8a8a8a;"></div>
<svg class="a" style="left:2322.5px;top:764.2px;" width="24" height="27" viewBox="0 0 24 27" fill="none"><path d="M3 25.5V3C8 0.5 13 5.5 21.5 2.5L18.5 10L21.5 17C14 19.5 9 14.5 3 17" fill="#3e63dd" stroke="#3e63dd" stroke-width="2.4" stroke-linejoin="round" stroke-linecap="round"/></svg>
<div class="t" style="left:2368.0px;top:764.3px;font-size:28.1px;color:#555555;font-weight:400;">Normal</div>
<div class="a" style="left:2529.0px;top:754.7px;width:143.0px;height:46.5px;background:#efefef;border-radius:10px;"></div>
<div class="t" style="left:2582.0px;top:767.8px;font-size:23.4px;color:#222222;font-weight:400;-webkit-text-stroke:0.5px #222;">TO DO</div>
<div class="a" style="left:2848.6px;top:779.4px;width:14.9px;height:1.5px;background:#aaaaaa;"></div>
<div class="a" style="left:737.0px;top:812.2px;width:2186.0px;height:1.5px;background:#ededed;"></div>
<svg class="a" style="left:798.0px;top:838.4px;" width="22" height="22" viewBox="0 0 22 22" fill="none"><path d="M11.0 1.5V20.5M1.5 11.0H20.5" stroke="#8a8a8a" stroke-width="2.3" stroke-linecap="round"/></svg>
<div class="t" style="left:850.2px;top:836.5px;font-size:28.1px;color:#888888;font-weight:400;">Add Task</div>
<svg class="a" style="left:687.0px;top:938.0px;" width="20" height="16" viewBox="0 0 20 16" fill="none"><path d="M2.5 3.5H17.5L10 13Z" fill="#777" stroke="#777" stroke-width="2" stroke-linejoin="round"/></svg>
<div class="a" style="left:737.0px;top:920.5px;width:479.0px;height:48.0px;background:#efefef;border-radius:10px;"></div>
<svg class="a" style="left:748.0px;top:931.5px;" width="28" height="27" viewBox="0 0 28 27" fill="none"><path d="M7 2H21V10C21 14.5 18 17.5 14 17.5C10 17.5 7 14.5 7 10Z" fill="#16a184"/><path d="M7 4.5H3.5C3 4.5 2.5 5 2.5 5.5C2.5 9.5 4.5 12 8 12.5M21 4.5H24.5C25 4.5 25.5 5 25.5 5.5C25.5 9.5 23.5 12 20 12.5" stroke="#16a184" stroke-width="2.6"/><rect x="12" y="17" width="4" height="5" fill="#16a184"/><rect x="8" y="21.5" width="12" height="4.5" rx="1.2" fill="#16a184"/></svg>
<div class="t" style="left:784.0px;top:930.3px;font-size:29.3px;color:#262626;font-weight:400;-webkit-text-stroke:0.35px #262626;">By 2028, become the #1 reco...</div>
<div class="t" style="left:1245.0px;top:933.8px;font-size:25.5px;color:#8a8a8a;font-weight:400;">2</div>
<svg class="a" style="left:1286.0px;top:939.8px;" width="35.0" height="10" viewBox="0 0 35.0 10" fill="none"><circle cx="2.5" cy="5" r="2.5" fill="#777"/><circle cx="12.5" cy="5" r="2.5" fill="#777"/><circle cx="22.5" cy="5" r="2.5" fill="#777"/></svg>
<svg class="a" style="left:1336.0px;top:934.0px;" width="22" height="22" viewBox="0 0 22 22" fill="none"><path d="M11.0 1.5V20.5M1.5 11.0H20.5" stroke="#777" stroke-width="2.3" stroke-linecap="round"/></svg>
<div class="t" style="left:1371.6px;top:934.1px;font-size:25.2px;color:#8a8a8a;font-weight:400;">Add Task</div>
<div class="t" style="left:746.0px;top:997.0px;font-size:24.4px;color:#8a8a8a;font-weight:400;">Name</div>
<div class="a" style="left:820.4px;top:992.0px;width:39.2px;height:35.0px;background:#ececfc;border-radius:50%;"></div>
<svg class="a" style="left:830.0px;top:997.0px;" width="20" height="26" viewBox="0 0 20 26" fill="none"><path d="M10 23V3M3 10L10 3L17 10" stroke="#4b3fc2" stroke-width="2.3" stroke-linecap="round" stroke-linejoin="round"/></svg>
<div class="t" style="left:1461.0px;top:996.5px;font-size:25.3px;color:#8a8a8a;font-weight:400;">Owner(s)</div>
<div class="t" style="left:1661.0px;top:996.0px;font-size:25.9px;color:#8a8a8a;font-weight:400;">Start date</div>
<div class="t" style="left:1884.3px;top:996.2px;font-size:25.6px;color:#8a8a8a;font-weight:400;">Duration</div>
<div class="t" style="left:2110.0px;top:996.0px;font-size:25.9px;color:#8a8a8a;font-weight:400;">Due date</div>
<div class="t" style="left:2323.7px;top:995.6px;font-size:26.3px;color:#8a8a8a;font-weight:400;">Priority</div>
<div class="t" style="left:2529.0px;top:996.0px;font-size:25.9px;color:#8a8a8a;font-weight:400;">Status</div>
<svg class="a" style="left:2860.0px;top:995.5px;" width="29" height="29" viewBox="0 0 29 29" fill="none"><circle cx="14.5" cy="14.5" r="12" stroke="#6a6a6a" stroke-width="2.3"/><path d="M14.5 8.5V20.5M8.5 14.5H20.5" stroke="#6a6a6a" stroke-width="2.3" stroke-linecap="round"/></svg>
<div class="a" style="left:737.0px;top:1040.8px;width:2186.0px;height:1.5px;background:#ebebeb;"></div>
<div class="t" style="left:850.0px;top:1062.3px;font-size:29.6px;color:#1f1f1f;font-weight:400;-webkit-text-stroke:0.4px #1f1f1f;">Objective 4 – [Outline Objective]</div>
<div class="a" style="left:1884.0px;top:1077.7px;width:15.0px;height:1.7px;background:#8a8a8a;"></div>
<svg class="a" style="left:2322.5px;top:1063.0px;" width="24" height="27" viewBox="0 0 24 27" fill="none"><path d="M3 25.5V3C8 0.5 13 5.5 21.5 2.5L18.5 10L21.5 17C14 19.5 9 14.5 3 17" fill="#3e63dd" stroke="#3e63dd" stroke-width="2.4" stroke-linejoin="round" stroke-linecap="round"/></svg>
<div class="t" style="left:2368.0px;top:1063.1px;font-size:28.1px;color:#555555;font-weight:400;">Normal</div>
<div class="a" style="left:2529.0px;top:1053.5px;width:143.0px;height:46.5px;background:#efefef;border-radius:10px;"></div>
<div class="t" style="left:2582.0px;top:1066.6px;font-size:23.4px;color:#222222;font-weight:400;-webkit-text-stroke:0.5px #222;">TO DO</div>
<div class="a" style="left:2848.6px;top:1078.2px;width:14.9px;height:1.5px;background:#aaaaaa;"></div>
<div class="a" style="left:737.0px;top:1111.0px;width:2186.0px;height:1.5px;background:#ededed;"></div>
<div class="t" style="left:850.0px;top:1132.5px;font-size:29.6px;color:#1f1f1f;font-weight:400;-webkit-text-stroke:0.4px #1f1f1f;">Objective 5 – [Outline Objective]</div>
<div class="a" style="left:1884.0px;top:1147.9px;width:15.0px;height:1.7px;background:#8a8a8a;"></div>
<svg class="a" style="left:2322.5px;top:1133.2px;" width="24" height="27" viewBox="0 0 24 27" fill="none"><path d="M3 25.5V3C8 0.5 13 5.5 21.5 2.5L18.5 10L21.5 17C14 19.5 9 14.5 3 17" fill="#3e63dd" stroke="#3e63dd" stroke-width="2.4" stroke-linejoin="round" stroke-linecap="round"/></svg>
<div class="t" style="left:2368.0px;top:1133.3px;font-size:28.1px;color:#555555;font-weight:400;">Normal</div>
<div class="a" style="left:2529.0px;top:1123.7px;width:143.0px;height:46.5px;background:#efefef;border-radius:10px;"></div>
<div class="t" style="left:2582.0px;top:1136.8px;font-size:23.4px;color:#222222;font-weight:400;-webkit-text-stroke:0.5px #222;">TO DO</div>
<div class="a" style="left:2848.6px;top:1148.4px;width:14.9px;height:1.5px;background:#aaaaaa;"></div>
<div class="a" style="left:737.0px;top:1181.2px;width:2186.0px;height:1.5px;background:#ededed;"></div>
<svg class="a" style="left:798.0px;top:1207.4px;" width="22" height="22" viewBox="0 0 22 22" fill="none"><path d="M11.0 1.5V20.5M1.5 11.0H20.5" stroke="#8a8a8a" stroke-width="2.3" stroke-linecap="round"/></svg>
<div class="t" style="left:850.2px;top:1205.5px;font-size:28.1px;color:#888888;font-weight:400;">Add Task</div>
<svg class="a" style="left:687.0px;top:1307.0px;" width="20" height="16" viewBox="0 0 20 16" fill="none"><path d="M2.5 3.5H17.5L10 13Z" fill="#777" stroke="#777" stroke-width="2" stroke-linejoin="round"/></svg>
<div class="a" style="left:737.0px;top:1289.5px;width:479.0px;height:48.0px;background:#efefef;border-radius:10px;"></div>
<svg class="a" style="left:748.0px;top:1300.5px;" width="28" height="27" viewBox="0 0 28 27" fill="none"><path d="M7 2H21V10C21 14.5 18 17.5 14 17.5C10 17.5 7 14.5 7 10Z" fill="#f6b30f"/><path d="M7 4.5H3.5C3 4.5 2.5 5 2.5 5.5C2.5 9.5 4.5 12 8 12.5M21 4.5H24.5C25 4.5 25.5 5 25.5 5.5C25.5 9.5 23.5 12 20 12.5" stroke="#f6b30f" stroke-width="2.6"/><rect x="12" y="17" width="4" height="5" fill="#f6b30f"/><rect x="8" y="21.5" width="12" height="4.5" rx="1.2" fill="#f6b30f"/></svg>
<div class="t" style="left:784.0px;top:1299.3px;font-size:29.3px;color:#262626;font-weight:400;-webkit-text-stroke:0.35px #262626;">By 2028, launch and scale dig...</div>
<div class="t" style="left:1242.5px;top:1302.8px;font-size:25.5px;color:#8a8a8a;font-weight:400;">1</div>
<svg class="a" style="left:1283.5px;top:1308.8px;" width="35.0" height="10" viewBox="0 0 35.0 10" fill="none"><circle cx="2.5" cy="5" r="2.5" fill="#777"/><circle cx="12.5" cy="5" r="2.5" fill="#777"/><circle cx="22.5" cy="5" r="2.5" fill="#777"/></svg>
<svg class="a" style="left:1333.5px;top:1303.0px;" width="22" height="22" viewBox="0 0 22 22" fill="none"><path d="M11.0 1.5V20.5M1.5 11.0H20.5" stroke="#777" stroke-width="2.3" stroke-linecap="round"/></svg>
<div class="t" style="left:1369.1px;top:1303.1px;font-size:25.2px;color:#8a8a8a;font-weight:400;">Add Task</div>
<div class="t" style="left:746.0px;top:1366.0px;font-size:24.4px;color:#8a8a8a;font-weight:400;">Name</div>
<div class="a" style="left:820.4px;top:1361.0px;width:39.2px;height:35.0px;background:#ececfc;border-radius:50%;"></div>
<svg class="a" style="left:830.0px;top:1366.0px;" width="20" height="26" viewBox="0 0 20 26" fill="none"><path d="M10 23V3M3 10L10 3L17 10" stroke="#4b3fc2" stroke-width="2.3" stroke-linecap="round" stroke-linejoin="round"/></svg>
<div class="t" style="left:1461.0px;top:1365.5px;font-size:25.3px;color:#8a8a8a;font-weight:400;">Owner(s)</div>
<div class="t" style="left:1661.0px;top:1365.0px;font-size:25.9px;color:#8a8a8a;font-weight:400;">Start date</div>
<div class="t" style="left:1884.3px;top:1365.2px;font-size:25.6px;color:#8a8a8a;font-weight:400;">Duration</div>
<div class="t" style="left:2110.0px;top:1365.0px;font-size:25.9px;color:#8a8a8a;font-weight:400;">Due date</div>
<div class="t" style="left:2323.7px;top:1364.6px;font-size:26.3px;color:#8a8a8a;font-weight:400;">Priority</div>
<div class="t" style="left:2529.0px;top:1365.0px;font-size:25.9px;color:#8a8a8a;font-weight:400;">Status</div>
<svg class="a" style="left:2860.0px;top:1364.5px;" width="29" height="29" viewBox="0 0 29 29" fill="none"><circle cx="14.5" cy="14.5" r="12" stroke="#6a6a6a" stroke-width="2.3"/><path d="M14.5 8.5V20.5M8.5 14.5H20.5" stroke="#6a6a6a" stroke-width="2.3" stroke-linecap="round"/></svg>
<div class="a" style="left:737.0px;top:1409.8px;width:2186.0px;height:1.5px;background:#ebebeb;"></div>
<div class="t" style="left:850.0px;top:1431.3px;font-size:29.6px;color:#1f1f1f;font-weight:400;-webkit-text-stroke:0.4px #1f1f1f;">Objective 2 – [Outline Objective]</div>
<div class="a" style="left:1884.0px;top:1446.7px;width:15.0px;height:1.7px;background:#8a8a8a;"></div>
<svg class="a" style="left:2322.5px;top:1432.0px;" width="24" height="27" viewBox="0 0 24 27" fill="none"><path d="M3 25.5V3C8 0.5 13 5.5 21.5 2.5L18.5 10L21.5 17C14 19.5 9 14.5 3 17" fill="#3e63dd" stroke="#3e63dd" stroke-width="2.4" stroke-linejoin="round" stroke-linecap="round"/></svg>
<div class="t" style="left:2368.0px;top:1432.1px;font-size:28.1px;color:#555555;font-weight:400;">Normal</div>
<div class="a" style="left:2529.0px;top:1422.5px;width:143.0px;height:46.5px;background:#efefef;border-radius:10px;"></div>
<div class="t" style="left:2582.0px;top:1435.6px;font-size:23.4px;color:#222222;font-weight:400;-webkit-text-stroke:0.5px #222;">TO DO</div>
<div class="a" style="left:2848.6px;top:1447.2px;width:14.9px;height:1.5px;background:#aaaaaa;"></div>
<div class="a" style="left:737.0px;top:1480.0px;width:2186.0px;height:1.5px;background:#ededed;"></div>
<svg class="a" style="left:798.0px;top:1506.2px;" width="22" height="22" viewBox="0 0 22 22" fill="none"><path d="M11.0 1.5V20.5M1.5 11.0H20.5" stroke="#8a8a8a" stroke-width="2.3" stroke-linecap="round"/></svg>
<div class="t" style="left:850.2px;top:1504.3px;font-size:28.1px;color:#888888;font-weight:400;">Add Task</div>
<svg class="a" style="left:0;top:0" width="2936" height="1835" viewBox="0 0 2936 1835" fill="none"><defs><clipPath id="lgc"><rect x="26" y="23.2" width="36" height="35.5" rx="8"/></clipPath></defs><g clip-path="url(#lgc)"><rect x="26" y="23" width="36" height="36" fill="#9a62fb"/><path d="M26 23H62V46.5C56 44 50 44.5 44 45C38 45.5 32 44 26 45Z" fill="#ff2f78"/><path d="M32.5 23H62V36.5H42C36.5 36.5 32.5 32 32.5 27Z" fill="#fba333"/><path d="M43.9 31.2L54.8 51L43.9 44.8L33.4 51Z" fill="#fff" stroke="#fff" stroke-width="1" stroke-linejoin="round"/></g><g stroke="#b0b0b0" stroke-width="1.5" fill="none"><path d="M1341.3999999999999 36.800000000000004V46.6M1346.2 36.800000000000004V46.6M1338.8999999999999 39.300000000000004H1348.7M1338.8999999999999 44.1H1348.7"/><circle cx="1338.8999999999999" cy="36.800000000000004" r="2.5"/><circle cx="1348.7" cy="36.800000000000004" r="2.5"/><circle cx="1338.8999999999999" cy="46.6" r="2.5"/><circle cx="1348.7" cy="46.6" r="2.5"/></g><ellipse cx="0" cy="0" rx="6.20" ry="5.20" fill="#6e8ff8" transform="translate(1725.7,40.2) rotate(-120) translate(9.80,0)"/><ellipse cx="0" cy="0" rx="6.20" ry="5.20" fill="#2f86f0" transform="translate(1725.7,40.2) rotate(-60) translate(9.80,0)"/><ellipse cx="0" cy="0" rx="6.20" ry="5.20" fill="#8c5cf5" transform="translate(1725.7,40.2) rotate(0) translate(9.80,0)"/><ellipse cx="0" cy="0" rx="6.20" ry="5.20" fill="#ef3dc8" transform="translate(1725.7,40.2) rotate(60) translate(9.80,0)"/><ellipse cx="0" cy="0" rx="6.20" ry="5.20" fill="#ec6a3b" transform="translate(1725.7,40.2) rotate(120) translate(9.80,0)"/><ellipse cx="0" cy="0" rx="6.20" ry="5.20" fill="#c08bbd" transform="translate(1725.7,40.2) rotate(180) translate(9.80,0)"/><path d="M1725.7 35.2Q1725.7 40.2 1730.7 40.2Q1725.7 40.2 1725.7 45.2Q1725.7 40.2 1720.7 40.2Q1725.7 40.2 1725.7 35.2Z" fill="#fff"/><g stroke="#7f7f7f" stroke-width="2.5" stroke-linecap="round" stroke-linejoin="round" fill="none"><path d="M2554 30.2A12.3 12.3 0 1 0 2551.5 52.3"/><path d="M2542.4 41.2L2546.5 45L2560.5 31"/><path d="M2559.3 41.5V51M2554.6 46.2H2564"/><rect x="2587.5" y="31.5" width="25" height="21.5" rx="5"/><path d="M2596.5 31.5V30C2596.5 28.3 2597.5 27.5 2599 27.5H2601C2602.5 27.5 2603.5 28.3 2603.5 30V31.5"/><path d="M2587.8 40.5C2596 44.8 2604 44.8 2612.2 40.5"/><rect x="2641.5" y="30.5" width="22" height="22.5" rx="5"/><circle cx="2647.3" cy="29.3" r="2.3" fill="#fcfcfc"/><circle cx="2657.3" cy="29.3" r="2.3" fill="#fcfcfc"/><path d="M2646.8 38.1H2658M2646.8 42.7H2658M2646.8 47.2H2651.5"/><rect x="2692" y="31" width="18.5" height="19" rx="5"/><path d="M2710.5 36.5L2714 34.8C2715.3 34.3 2716.3 35 2716.3 36.3V45.3C2716.3 46.6 2715.3 47.3 2714 46.8L2710.5 45"/><circle cx="2755.6" cy="40.6" r="10.3"/><path d="M2755.6 34.5V40.6L2759.6 44.6"/><path d="M2744.3 35.5C2742.8 32.5 2744.5 28.8 2748 28.3C2749.5 28 2751 28.5 2752 29.5"/><path d="M2766.9 35.5C2768.4 32.5 2766.7 28.8 2763.2 28.3C2761.7 28 2760.2 28.5 2759.2 29.5"/><path d="M2747.5 50.5L2746 52.5M2763.7 50.5L2765.2 52.5"/><path d="M2797.5 32.5C2797.5 29.5 2799 27.8 2802 27.8H2809.5L2818.8 37V49C2818.8 52 2817.3 53.4 2814.3 53.4H2802C2799 53.4 2797.5 52 2797.5 49Z"/><path d="M2809.5 28V33C2809.5 35 2811 36.5 2813 36.5H2818.5"/><path d="M2801.8 38H2807.5M2801.8 42.6H2814.3M2801.8 47.2H2814.3"/></g><g stroke="#fff" stroke-width="2.7" stroke-linecap="round" stroke-linejoin="round" fill="none"><rect x="48.5" y="243.5" width="30.9" height="29" rx="6"/><circle cx="57.4" cy="243.3" r="2.7" fill="#3a3450"/><circle cx="70.5" cy="243.3" r="2.7" fill="#3a3450"/><circle cx="59.2" cy="375.5" r="6.8"/><path d="M59.2 382.3C53 382.3 48.8 386.5 48.8 392.5C48.8 394.5 49.8 395.5 51.5 395.5H66.9C68.6 395.5 69.6 394.5 69.6 392.5C69.6 386.5 65.4 382.3 59.2 382.3Z"/><path d="M66.2 365.8C67.3 365.2 68.6 364.9 70 364.9C74.2 364.9 76.8 367.8 76.8 371.4C76.8 374.4 74.9 376.7 72.4 377.6C75.6 379.3 77.6 382.5 77.6 386.6C77.6 388.3 77 389.6 75.8 390.2"/><path d="M49.3 494C49.3 490.5 51 488.8 54.5 488.8H65L74.2 498V514.2C74.2 517.7 72.5 519.4 69 519.4H54.5C51 519.4 49.3 517.7 49.3 514.2Z"/><path d="M65 489V494.5C65 496.5 66.3 497.8 68.3 497.8H74"/><path d="M56 500.7H63.6M56 506.3H71.2M56 512.3H71.2" stroke-width="2.6"/><rect x="49" y="616.4" width="22.7" height="22.6" rx="6"/><path d="M71.7 623.5L76.3 621.2C77.6 620.6 78.6 621.3 78.6 622.6V632.8C78.6 634.1 77.6 634.8 76.3 634.2L71.7 631.9"/></g><text x="63.6" y="265.8" font-family="Liberation Sans" font-weight="700" font-size="18.5" fill="#fff" text-anchor="middle">16</text><circle cx="273.6" cy="446.8" r="13" fill="#5646e0"/><path d="M270 441.2L279.2 446.8L270 452.4Z" fill="#d9d4ff" stroke="#fff" stroke-width="2.6" stroke-linejoin="round"/><g stroke="#666" stroke-linecap="round" fill="none"><circle cx="268" cy="509.5" r="4.6" stroke-width="4"/><path d="M271.5 506L284 493.5" stroke-width="4"/><path d="M279.5 498L283.5 502M282.5 495L285.5 498" stroke-width="3.4"/></g><ellipse cx="0" cy="0" rx="7.44" ry="6.24" fill="#6e8ff8" transform="translate(2756.5,126.5) rotate(-120) translate(11.76,0)"/><ellipse cx="0" cy="0" rx="7.44" ry="6.24" fill="#2f86f0" transform="translate(2756.5,126.5) rotate(-60) translate(11.76,0)"/><ellipse cx="0" cy="0" rx="7.44" ry="6.24" fill="#8c5cf5" transform="translate(2756.5,126.5) rotate(0) translate(11.76,0)"/><ellipse cx="0" cy="0" rx="7.44" ry="6.24" fill="#ef3dc8" transform="translate(2756.5,126.5) rotate(60) translate(11.76,0)"/><ellipse cx="0" cy="0" rx="7.44" ry="6.24" fill="#ec6a3b" transform="translate(2756.5,126.5) rotate(120) translate(11.76,0)"/><ellipse cx="0" cy="0" rx="7.44" ry="6.24" fill="#c08bbd" transform="translate(2756.5,126.5) rotate(180) translate(11.76,0)"/><path d="M2756.5 120.5Q2756.5 126.5 2762.5 126.5Q2756.5 126.5 2756.5 132.5Q2756.5 126.5 2750.5 126.5Q2756.5 126.5 2756.5 120.5Z" fill="#fff"/><g transform="translate(873,180) rotate(45)" fill="#fff" stroke="#fff" stroke-width="3.2" stroke-linejoin="round"><rect x="-4.6" y="-9.5" width="9.2" height="3.6" rx="1.3"/><path d="M-2.8 -6.2H2.8L3.4 -1.2L5.6 1.6V2.6H-5.6V1.6L-3.4 -1.2Z"/><path d="M0 2.5V10" stroke-width="1.8" stroke-linecap="round"/></g><g transform="translate(873,180) rotate(45)" fill="#222" stroke="#222" stroke-width="0"><rect x="-4.6" y="-9.5" width="9.2" height="3.6" rx="1.3"/><path d="M-2.8 -6.2H2.8L3.4 -1.2L5.6 1.6V2.6H-5.6V1.6L-3.4 -1.2Z"/><path d="M0 2.5V10" stroke-width="1.8" stroke="#222" stroke-linecap="round"/></g><g fill="#222"><path d="M875.5 182H897.5V188.5C897.5 195 893 199 886.5 199C880 199 875.5 195 875.5 188.5Z"/><path d="M876 184.5H873.5C871.8 184.5 870.8 185.5 871 187.2C871.5 191 873.5 193.5 877.5 194" stroke="#222" stroke-width="2.6" fill="none"/><path d="M897 184.5H899.5C901.2 184.5 902.2 185.5 902 187.2C901.5 191 899.5 193.5 895.5 194" stroke="#222" stroke-width="2.6" fill="none"/><rect x="884.5" y="198" width="4" height="4.5"/><rect x="879.5" y="202" width="14" height="3.6" rx="1"/><path d="M893 208C893 203.5 896 201.8 900 201.8C904 201.8 907 203.5 907 208V212C907 213.5 906 214.5 904.5 214.5H895.5C894 214.5 893 213.5 893 212Z" fill="#222" stroke="#fcfcfc" stroke-width="1.2"/><path d="M897 208.5C898.5 210.5 901.5 210.5 903 208.5" stroke="#fff" stroke-width="1.6" stroke-linecap="round" fill="none"/></g><g transform="translate(1022,181) rotate(45)" fill="#fff" stroke="#fff" stroke-width="3.2" stroke-linejoin="round"><rect x="-4.6" y="-9.5" width="9.2" height="3.6" rx="1.3"/><path d="M-2.8 -6.2H2.8L3.4 -1.2L5.6 1.6V2.6H-5.6V1.6L-3.4 -1.2Z"/><path d="M0 2.5V10" stroke-width="1.8" stroke-linecap="round"/></g><g transform="translate(1022,181) rotate(45)" fill="#808080" stroke="#808080" stroke-width="0"><rect x="-4.6" y="-9.5" width="9.2" height="3.6" rx="1.3"/><path d="M-2.8 -6.2H2.8L3.4 -1.2L5.6 1.6V2.6H-5.6V1.6L-3.4 -1.2Z"/><path d="M0 2.5V10" stroke-width="1.8" stroke="#808080" stroke-linecap="round"/></g><rect x="1022.4" y="180" width="26.5" height="26.5" rx="6" fill="#3e63dd"/><rect x="1028.5" y="186" width="5.5" height="15.5" rx="1.2" fill="#fff"/><rect x="1036.5" y="186" width="6.5" height="8.5" rx="1.2" fill="#fff"/><g transform="translate(1186,181) rotate(45)" fill="#fff" stroke="#fff" stroke-width="3.2" stroke-linejoin="round"><rect x="-4.6" y="-9.5" width="9.2" height="3.6" rx="1.3"/><path d="M-2.8 -6.2H2.8L3.4 -1.2L5.6 1.6V2.6H-5.6V1.6L-3.4 -1.2Z"/><path d="M0 2.5V10" stroke-width="1.8" stroke-linecap="round"/></g><g transform="translate(1186,181) rotate(45)" fill="#808080" stroke="#808080" stroke-width="0"><rect x="-4.6" y="-9.5" width="9.2" height="3.6" rx="1.3"/><path d="M-2.8 -6.2H2.8L3.4 -1.2L5.6 1.6V2.6H-5.6V1.6L-3.4 -1.2Z"/><path d="M0 2.5V10" stroke-width="1.8" stroke="#808080" stroke-linecap="round"/></g><path d="M1186 187C1186 183.5 1188 181.5 1191.5 181.5H1207.5C1211 181.5 1213 183.5 1213 187V200.5C1213 204 1211 206 1207.5 206H1191.5C1188 206 1186 204 1186 200.5Z" fill="#e5484d"/><path d="M1196.5 193.3H1208.5M1190.8 199.3H1202.5" stroke="#fff" stroke-width="2.8" stroke-linecap="round"/><path d="M1207.5 175L1213.5 173.2L1219.5 175V180C1219.5 183 1216.5 185 1213.5 186.3C1210.5 185 1207.5 183 1207.5 180Z" fill="#fff" stroke="#999" stroke-width="1.3"/><path d="M1210.8 179.3L1212.8 181.3L1216.3 177.5" stroke="#999" stroke-width="1.2" fill="none"/><g transform="translate(1311,180) rotate(45)" fill="#fff" stroke="#fff" stroke-width="3.2" stroke-linejoin="round"><rect x="-4.6" y="-9.5" width="9.2" height="3.6" rx="1.3"/><path d="M-2.8 -6.2H2.8L3.4 -1.2L5.6 1.6V2.6H-5.6V1.6L-3.4 -1.2Z"/><path d="M0 2.5V10" stroke-width="1.8" stroke-linecap="round"/></g><g transform="translate(1311,180) rotate(45)" fill="#808080" stroke="#808080" stroke-width="0"><rect x="-4.6" y="-9.5" width="9.2" height="3.6" rx="1.3"/><path d="M-2.8 -6.2H2.8L3.4 -1.2L5.6 1.6V2.6H-5.6V1.6L-3.4 -1.2Z"/><path d="M0 2.5V10" stroke-width="1.8" stroke="#808080" stroke-linecap="round"/></g><g transform="translate(1485,180) rotate(45)" fill="#fff" stroke="#fff" stroke-width="3.2" stroke-linejoin="round"><rect x="-4.6" y="-9.5" width="9.2" height="3.6" rx="1.3"/><path d="M-2.8 -6.2H2.8L3.4 -1.2L5.6 1.6V2.6H-5.6V1.6L-3.4 -1.2Z"/><path d="M0 2.5V10" stroke-width="1.8" stroke-linecap="round"/></g><g transform="translate(1485,180) rotate(45)" fill="#808080" stroke="#808080" stroke-width="0"><rect x="-4.6" y="-9.5" width="9.2" height="3.6" rx="1.3"/><path d="M-2.8 -6.2H2.8L3.4 -1.2L5.6 1.6V2.6H-5.6V1.6L-3.4 -1.2Z"/><path d="M0 2.5V10" stroke-width="1.8" stroke="#808080" stroke-linecap="round"/></g><g transform="translate(1673,180) rotate(45)" fill="#fff" stroke="#fff" stroke-width="3.2" stroke-linejoin="round"><rect x="-4.6" y="-9.5" width="9.2" height="3.6" rx="1.3"/><path d="M-2.8 -6.2H2.8L3.4 -1.2L5.6 1.6V2.6H-5.6V1.6L-3.4 -1.2Z"/><path d="M0 2.5V10" stroke-width="1.8" stroke-linecap="round"/></g><g transform="translate(1673,180) rotate(45)" fill="#808080" stroke="#808080" stroke-width="0"><rect x="-4.6" y="-9.5" width="9.2" height="3.6" rx="1.3"/><path d="M-2.8 -6.2H2.8L3.4 -1.2L5.6 1.6V2.6H-5.6V1.6L-3.4 -1.2Z"/><path d="M0 2.5V10" stroke-width="1.8" stroke="#808080" stroke-linecap="round"/></g><g transform="translate(2383.2 259) scale(0.735) translate(-48.8 -364.9)" stroke="#777777" stroke-width="3" stroke-linecap="round" stroke-linejoin="round" fill="none"><circle cx="59.2" cy="375.5" r="6.8"/><path d="M59.2 382.3C53 382.3 48.8 386.5 48.8 392.5C48.8 394.5 49.8 395.5 51.5 395.5H66.9C68.6 395.5 69.6 394.5 69.6 392.5C69.6 386.5 65.4 382.3 59.2 382.3Z"/><path d="M66.2 365.8C67.3 365.2 68.6 364.9 70 364.9C74.2 364.9 76.8 367.8 76.8 371.4C76.8 374.4 74.9 376.7 72.4 377.6C75.6 379.3 77.6 382.5 77.6 386.6C77.6 388.3 77 389.6 75.8 390.2"/></g><rect x="1044.6" y="471" width="2.8" height="5" fill="#e9a23b"/><ellipse cx="1046" cy="471.5" rx="2.6" ry="2" fill="#f5c04a"/><rect x="1034" y="475.5" width="24" height="20.5" rx="6.5" fill="#4c8f9e"/><rect x="1031.8" y="481" width="3" height="8" rx="1.4" fill="#c2464e"/><rect x="1057.2" y="481" width="3" height="8" rx="1.4" fill="#c2464e"/><rect x="1037" y="479" width="18" height="13" rx="4.5" fill="#8cc6d2"/><circle cx="1041.5" cy="484.5" r="2.3" fill="#e8fbff"/><circle cx="1050.5" cy="484.5" r="2.3" fill="#e8fbff"/><rect x="1043" y="488.5" width="6" height="1.6" rx="0.8" fill="#4b6470"/><path d="M799.5 700.5C799.5 697.5 802 696.0 805 697.4L818 704.8C821 706.5 821 709.5 818 711.2L805 718.6C802 720.0 799.5 718.5 799.5 715.5Z" fill="#8a8a8a" stroke="#8a8a8a" stroke-width="3" stroke-linejoin="round"/><g stroke="#808080" stroke-width="2.4" stroke-linecap="round" stroke-linejoin="round" fill="none"><path d="M1471.8 708.3C1468.8 706.2 1468.5 701.5 1471 698.2C1473.5 695.0 1479 694.8 1481.8 698.0C1484.3 701.0 1483.8 705.8 1480.5 708.3"/><path d="M1471.8 708.3C1466.5 711.0 1464.5 715.0 1464.5 717.5C1464.5 719.0 1465.5 719.6 1467 719.6H1475"/><path d="M1483.8 711.0V720.6M1479 715.8H1488.6"/></g><g stroke="#808080" stroke-width="2.4" stroke-linecap="round" stroke-linejoin="round" fill="none"><path d="M1673.5 720.0H1667.3C1665 720.0 1663.8 718.8 1663.8 716.5V702.5C1663.8 700.2 1665 699.0 1667.3 699.0H1684.5C1686.8 699.0 1688 700.2 1688 702.5V708.5"/><path d="M1664.5 701.8H1687.3" stroke-width="3.6"/><circle cx="1669.8" cy="697.7" r="2.3" stroke-width="1.9" fill="#fff"/><circle cx="1680.1" cy="697.7" r="2.3" stroke-width="1.9" fill="#fff"/><path d="M1684.5 712.1V722.1M1679.5 717.1H1689.5"/></g><g stroke="#808080" stroke-width="2.4" stroke-linecap="round" stroke-linejoin="round" fill="none"><path d="M2122.0 720.0H2115.8C2113.5 720.0 2112.3 718.8 2112.3 716.5V702.5C2112.3 700.2 2113.5 699.0 2115.8 699.0H2133.0C2135.3 699.0 2136.5 700.2 2136.5 702.5V708.5"/><path d="M2113.0 701.8H2135.8" stroke-width="3.6"/><circle cx="2118.3" cy="697.7" r="2.3" stroke-width="1.9" fill="#fff"/><circle cx="2128.6" cy="697.7" r="2.3" stroke-width="1.9" fill="#fff"/><path d="M2133.0 712.1V722.1M2128.0 717.1H2138.0"/></g><circle cx="2554.3" cy="707.5" r="11.8" stroke="#8a8a8a" stroke-width="2.9" stroke-dasharray="4.2 5.07" stroke-linecap="round" transform="rotate(-101 2554.3 707.5)"/><path d="M799.5 770.7C799.5 767.7 802 766.2 805 767.6L818 775.0C821 776.7 821 779.7 818 781.4000000000001L805 788.8000000000001C802 790.2 799.5 788.7 799.5 785.7Z" fill="#8a8a8a" stroke="#8a8a8a" stroke-width="3" stroke-linejoin="round"/><g stroke="#808080" stroke-width="2.4" stroke-linecap="round" stroke-linejoin="round" fill="none"><path d="M1471.8 778.5C1468.8 776.4000000000001 1468.5 771.7 1471 768.4000000000001C1473.5 765.2 1479 765.0 1481.8 768.2C1484.3 771.2 1483.8 776.0 1480.5 778.5"/><path d="M1471.8 778.5C1466.5 781.2 1464.5 785.2 1464.5 787.7C1464.5 789.2 1465.5 789.8000000000001 1467 789.8000000000001H1475"/><path d="M1483.8 781.2V790.8000000000001M1479 786.0H1488.6"/></g><g stroke="#808080" stroke-width="2.4" stroke-linecap="round" stroke-linejoin="round" fill="none"><path d="M1673.5 790.2H1667.3C1665 790.2 1663.8 789.0 1663.8 786.7V772.7C1663.8 770.4000000000001 1665 769.2 1667.3 769.2H1684.5C1686.8 769.2 1688 770.4000000000001 1688 772.7V778.7"/><path d="M1664.5 772.0H1687.3" stroke-width="3.6"/><circle cx="1669.8" cy="767.9000000000001" r="2.3" stroke-width="1.9" fill="#fff"/><circle cx="1680.1" cy="767.9000000000001" r="2.3" stroke-width="1.9" fill="#fff"/><path d="M1684.5 782.3000000000001V792.3000000000001M1679.5 787.3000000000001H1689.5"/></g><g stroke="#808080" stroke-width="2.4" stroke-linecap="round" stroke-linejoin="round" fill="none"><path d="M2122.0 790.2H2115.8C2113.5 790.2 2112.3 789.0 2112.3 786.7V772.7C2112.3 770.4000000000001 2113.5 769.2 2115.8 769.2H2133.0C2135.3 769.2 2136.5 770.4000000000001 2136.5 772.7V778.7"/><path d="M2113.0 772.0H2135.8" stroke-width="3.6"/><circle cx="2118.3" cy="767.9000000000001" r="2.3" stroke-width="1.9" fill="#fff"/><circle cx="2128.6" cy="767.9000000000001" r="2.3" stroke-width="1.9" fill="#fff"/><path d="M2133.0 782.3000000000001V792.3000000000001M2128.0 787.3000000000001H2138.0"/></g><circle cx="2554.3" cy="777.7" r="11.8" stroke="#8a8a8a" stroke-width="2.9" stroke-dasharray="4.2 5.07" stroke-linecap="round" transform="rotate(-101 2554.3 777.7)"/><path d="M799.5 1069.5C799.5 1066.5 802 1065.0 805 1066.4L818 1073.8C821 1075.5 821 1078.5 818 1080.2L805 1087.6C802 1089.0 799.5 1087.5 799.5 1084.5Z" fill="#8a8a8a" stroke="#8a8a8a" stroke-width="3" stroke-linejoin="round"/><g stroke="#808080" stroke-width="2.4" stroke-linecap="round" stroke-linejoin="round" fill="none"><path d="M1471.8 1077.3C1468.8 1075.2 1468.5 1070.5 1471 1067.2C1473.5 1064.0 1479 1063.8 1481.8 1067.0C1484.3 1070.0 1483.8 1074.8 1480.5 1077.3"/><path d="M1471.8 1077.3C1466.5 1080.0 1464.5 1084.0 1464.5 1086.5C1464.5 1088.0 1465.5 1088.6 1467 1088.6H1475"/><path d="M1483.8 1080.0V1089.6M1479 1084.8H1488.6"/></g><g stroke="#808080" stroke-width="2.4" stroke-linecap="round" stroke-linejoin="round" fill="none"><path d="M1673.5 1089.0H1667.3C1665 1089.0 1663.8 1087.8 1663.8 1085.5V1071.5C1663.8 1069.2 1665 1068.0 1667.3 1068.0H1684.5C1686.8 1068.0 1688 1069.2 1688 1071.5V1077.5"/><path d="M1664.5 1070.8H1687.3" stroke-width="3.6"/><circle cx="1669.8" cy="1066.7" r="2.3" stroke-width="1.9" fill="#fff"/><circle cx="1680.1" cy="1066.7" r="2.3" stroke-width="1.9" fill="#fff"/><path d="M1684.5 1081.1V1091.1M1679.5 1086.1H1689.5"/></g><g stroke="#808080" stroke-width="2.4" stroke-linecap="round" stroke-linejoin="round" fill="none"><path d="M2122.0 1089.0H2115.8C2113.5 1089.0 2112.3 1087.8 2112.3 1085.5V1071.5C2112.3 1069.2 2113.5 1068.0 2115.8 1068.0H2133.0C2135.3 1068.0 2136.5 1069.2 2136.5 1071.5V1077.5"/><path d="M2113.0 1070.8H2135.8" stroke-width="3.6"/><circle cx="2118.3" cy="1066.7" r="2.3" stroke-width="1.9" fill="#fff"/><circle cx="2128.6" cy="1066.7" r="2.3" stroke-width="1.9" fill="#fff"/><path d="M2133.0 1081.1V1091.1M2128.0 1086.1H2138.0"/></g><circle cx="2554.3" cy="1076.5" r="11.8" stroke="#8a8a8a" stroke-width="2.9" stroke-dasharray="4.2 5.07" stroke-linecap="round" transform="rotate(-101 2554.3 1076.5)"/><path d="M799.5 1139.7C799.5 1136.7 802 1135.2 805 1136.6000000000001L818 1144.0C821 1145.7 821 1148.7 818 1150.4L805 1157.8C802 1159.2 799.5 1157.7 799.5 1154.7Z" fill="#8a8a8a" stroke="#8a8a8a" stroke-width="3" stroke-linejoin="round"/><g stroke="#808080" stroke-width="2.4" stroke-linecap="round" stroke-linejoin="round" fill="none"><path d="M1471.8 1147.5C1468.8 1145.4 1468.5 1140.7 1471 1137.4C1473.5 1134.2 1479 1134.0 1481.8 1137.2C1484.3 1140.2 1483.8 1145.0 1480.5 1147.5"/><path d="M1471.8 1147.5C1466.5 1150.2 1464.5 1154.2 1464.5 1156.7C1464.5 1158.2 1465.5 1158.8 1467 1158.8H1475"/><path d="M1483.8 1150.2V1159.8M1479 1155.0H1488.6"/></g><g stroke="#808080" stroke-width="2.4" stroke-linecap="round" stroke-linejoin="round" fill="none"><path d="M1673.5 1159.2H1667.3C1665 1159.2 1663.8 1158.0 1663.8 1155.7V1141.7C1663.8 1139.4 1665 1138.2 1667.3 1138.2H1684.5C1686.8 1138.2 1688 1139.4 1688 1141.7V1147.7"/><path d="M1664.5 1141.0H1687.3" stroke-width="3.6"/><circle cx="1669.8" cy="1136.9" r="2.3" stroke-width="1.9" fill="#fff"/><circle cx="1680.1" cy="1136.9" r="2.3" stroke-width="1.9" fill="#fff"/><path d="M1684.5 1151.3V1161.3M1679.5 1156.3H1689.5"/></g><g stroke="#808080" stroke-width="2.4" stroke-linecap="round" stroke-linejoin="round" fill="none"><path d="M2122.0 1159.2H2115.8C2113.5 1159.2 2112.3 1158.0 2112.3 1155.7V1141.7C2112.3 1139.4 2113.5 1138.2 2115.8 1138.2H2133.0C2135.3 1138.2 2136.5 1139.4 2136.5 1141.7V1147.7"/><path d="M2113.0 1141.0H2135.8" stroke-width="3.6"/><circle cx="2118.3" cy="1136.9" r="2.3" stroke-width="1.9" fill="#fff"/><circle cx="2128.6" cy="1136.9" r="2.3" stroke-width="1.9" fill="#fff"/><path d="M2133.0 1151.3V1161.3M2128.0 1156.3H2138.0"/></g><circle cx="2554.3" cy="1146.7" r="11.8" stroke="#8a8a8a" stroke-width="2.9" stroke-dasharray="4.2 5.07" stroke-linecap="round" transform="rotate(-101 2554.3 1146.7)"/><path d="M799.5 1438.5C799.5 1435.5 802 1434.0 805 1435.4L818 1442.8C821 1444.5 821 1447.5 818 1449.2L805 1456.6C802 1458.0 799.5 1456.5 799.5 1453.5Z" fill="#8a8a8a" stroke="#8a8a8a" stroke-width="3" stroke-linejoin="round"/><g stroke="#808080" stroke-width="2.4" stroke-linecap="round" stroke-linejoin="round" fill="none"><path d="M1471.8 1446.3C1468.8 1444.2 1468.5 1439.5 1471 1436.2C1473.5 1433.0 1479 1432.8 1481.8 1436.0C1484.3 1439.0 1483.8 1443.8 1480.5 1446.3"/><path d="M1471.8 1446.3C1466.5 1449.0 1464.5 1453.0 1464.5 1455.5C1464.5 1457.0 1465.5 1457.6 1467 1457.6H1475"/><path d="M1483.8 1449.0V1458.6M1479 1453.8H1488.6"/></g><g stroke="#808080" stroke-width="2.4" stroke-linecap="round" stroke-linejoin="round" fill="none"><path d="M1673.5 1458.0H1667.3C1665 1458.0 1663.8 1456.8 1663.8 1454.5V1440.5C1663.8 1438.2 1665 1437.0 1667.3 1437.0H1684.5C1686.8 1437.0 1688 1438.2 1688 1440.5V1446.5"/><path d="M1664.5 1439.8H1687.3" stroke-width="3.6"/><circle cx="1669.8" cy="1435.7" r="2.3" stroke-width="1.9" fill="#fff"/><circle cx="1680.1" cy="1435.7" r="2.3" stroke-width="1.9" fill="#fff"/><path d="M1684.5 1450.1V1460.1M1679.5 1455.1H1689.5"/></g><g stroke="#808080" stroke-width="2.4" stroke-linecap="round" stroke-linejoin="round" fill="none"><path d="M2122.0 1458.0H2115.8C2113.5 1458.0 2112.3 1456.8 2112.3 1454.5V1440.5C2112.3 1438.2 2113.5 1437.0 2115.8 1437.0H2133.0C2135.3 1437.0 2136.5 1438.2 2136.5 1440.5V1446.5"/><path d="M2113.0 1439.8H2135.8" stroke-width="3.6"/><circle cx="2118.3" cy="1435.7" r="2.3" stroke-width="1.9" fill="#fff"/><circle cx="2128.6" cy="1435.7" r="2.3" stroke-width="1.9" fill="#fff"/><path d="M2133.0 1450.1V1460.1M2128.0 1455.1H2138.0"/></g><circle cx="2554.3" cy="1445.5" r="11.8" stroke="#8a8a8a" stroke-width="2.9" stroke-dasharray="4.2 5.07" stroke-linecap="round" transform="rotate(-101 2554.3 1445.5)"/></svg>
</body></html>
